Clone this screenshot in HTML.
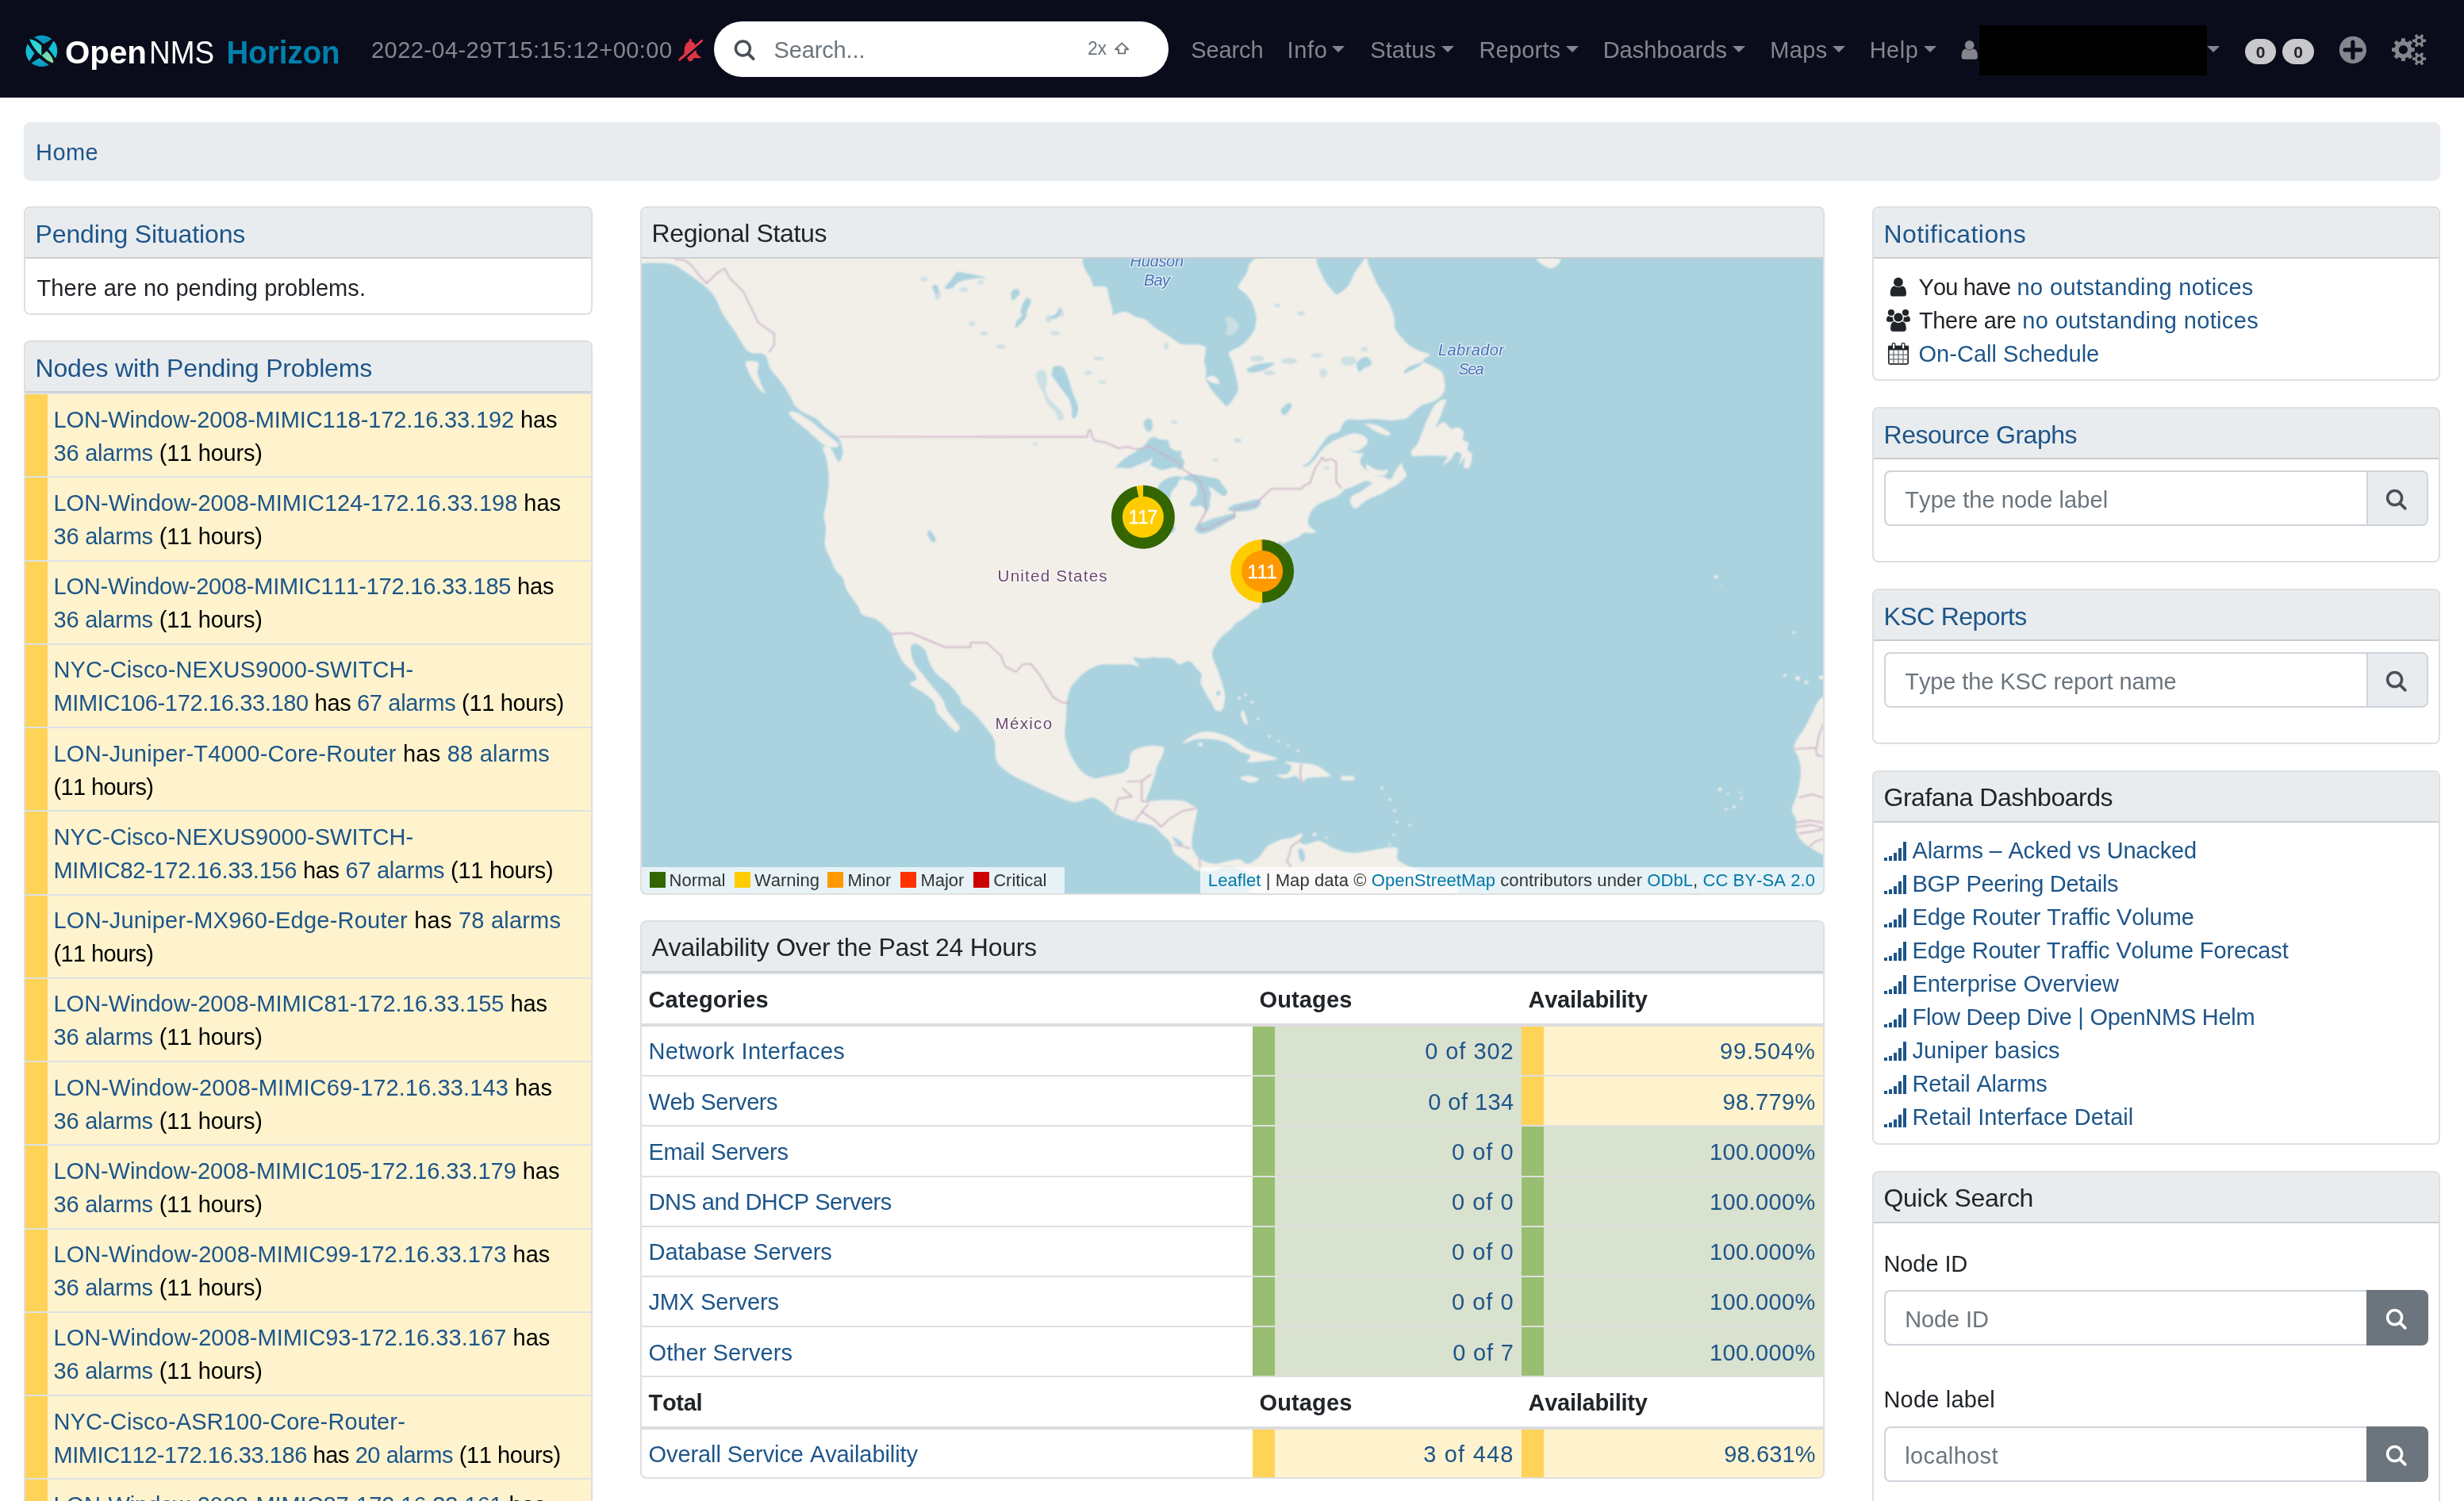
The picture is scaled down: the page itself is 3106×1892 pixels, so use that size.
<!DOCTYPE html>
<html lang="en"><head><meta charset="utf-8"><title>OpenNMS Web Console</title>
<style>
*{box-sizing:border-box}
html,body{margin:0;padding:0}
body{width:3106px;height:1892px;overflow:hidden;position:relative;background:#fff;font-family:"Liberation Sans",sans-serif;font-size:29px;line-height:42px;color:#212529;font-kerning:none;will-change:transform}
.lnk{color:#1d5589}
.nav{position:absolute;left:0;top:0;width:3106px;height:123px;background:#0a0c1b}
.nav .it{position:absolute;top:42px;height:42px;line-height:42px;color:#85868d;white-space:nowrap}
.nav .caret{position:absolute;top:58px;width:0;height:0;border-left:8px solid transparent;border-right:8px solid transparent;border-top:8.5px solid #85868d}
.bc{position:absolute;left:30px;top:154px;width:3046px;height:74px;background:#e9ecef;border-radius:8px;padding:17px 0 0 15px;white-space:nowrap}
.card{position:absolute;border:2px solid rgba(0,0,0,.125);border-radius:8px;background:#fff;overflow:hidden}
.card .hd{height:64px;line-height:62px;background:#e9ecef;border-bottom:2px solid rgba(0,0,0,.125);font-size:32px;padding-left:12.5px;white-space:nowrap;position:relative}
.card .hd span{position:relative;top:1.2px}
.abs{position:absolute;white-space:nowrap}
.prow{color:#000;height:105.25px;border-top:2px solid #dee2e6;background:#fef3cd;position:relative}
.prow .bar{position:absolute;left:0;top:0;bottom:0;width:28px;background:#fed358}
.prow .txt{position:absolute;left:35.5px;top:10.5px;white-space:nowrap}
.atab{position:relative;border-top:2px solid #dfdfe0}
.atab .ahead:first-child{height:66px}
.atab .ahead:first-child .c1,.atab .ahead:first-child .c2,.atab .ahead:first-child .c3{padding-top:10.9px}
.ahead,.arow{position:relative;white-space:nowrap}
.ahead{height:65.2px;border-bottom:4px solid #dddddf;font-weight:700}
.arow{height:63.2px;border-bottom:2px solid #dfdfe0}
.atab .c1,.atab .c2,.atab .c3{position:absolute;top:0;bottom:0;padding-top:10.4px}
.atab .c1{left:0;width:770px;padding-left:8.5px}
.atab .c2{left:770px;width:339px}
.atab .c3{left:1109px;width:380px}
.ahead .c2,.ahead .c3{padding-left:8.5px}
.arow .c2,.arow .c3{text-align:right;padding-right:9.3px}
.arow .bar{position:absolute;left:0;top:0;bottom:0;width:28px}

</style></head>
<body>
<div class="nav">
<svg class="abs" style="left:31.7px;top:43.7px" width="40.4" height="40.4" viewBox="0 0 40.4 40.4">
<defs>
<linearGradient id="lgA" x1="0" y1="0" x2="1" y2="1"><stop offset="0" stop-color="#17d4e2"/><stop offset="1" stop-color="#4fd9c2"/></linearGradient>
<linearGradient id="lgB" x1="0" y1="0" x2="1" y2="1"><stop offset="0" stop-color="#62d8bd"/><stop offset="1" stop-color="#8ce3a3"/></linearGradient>
<linearGradient id="lgC" x1="0" y1="0" x2="0" y2="1"><stop offset="0" stop-color="#0a9cc6"/><stop offset="1" stop-color="#0a8fba"/></linearGradient>
<linearGradient id="lgD" x1="0" y1="0" x2="0" y2="1"><stop offset="0" stop-color="#10b4d3"/><stop offset="1" stop-color="#0a8fba"/></linearGradient>
</defs>
<path d="M11.0,3.0 A20.2,20.2 0 0 1 33.4,5.2 L23.3,11.6 Q17,6.4 11.0,3.0Z" fill="url(#lgC)"/>
<path d="M35.8,7.3 A20.2,20.2 0 0 1 37.9,29.5 Q33.5,22.5 29.1,17.7Z" fill="#12bfd8"/>
<path d="M5.0,33.2 A20.2,20.2 0 0 1 2.8,11.2 Q7,17.5 11.4,23.1Z" fill="#13bdd7"/>
<path d="M29.7,37.7 A20.2,20.2 0 0 1 7.3,35.6 L17.7,29.3 Q24,34.5 29.7,37.7Z" fill="url(#lgD)"/>
<path d="M5.6,6.4 Q4.6,5 6.6,5.4 Q14,7 20.3,13.6 L20.3,26.3 Q10,17.5 5.6,6.4Z" fill="url(#lgA)"/>
<path d="M20.7,26.1 L26.9,20.3 Q34.5,27.5 35.3,34.0 Q35.3,35.6 33.4,35.0 Q27,33 20.7,26.1Z" fill="url(#lgB)"/>
</svg><svg class="abs" style="left:78px;top:36px" width="360" height="60" viewBox="0 0 360 60">
<text x="4" y="44" font-family="Liberation Sans, sans-serif" font-weight="700" font-size="41" fill="#fff" textLength="103" lengthAdjust="spacingAndGlyphs">Open</text>
<text x="110" y="44" font-family="Liberation Sans, sans-serif" font-weight="400" font-size="41" fill="#fff" textLength="82" lengthAdjust="spacingAndGlyphs">NMS</text>
<text x="207.6" y="44" font-family="Liberation Sans, sans-serif" font-weight="700" font-size="41" fill="#0081ad" textLength="143" lengthAdjust="spacingAndGlyphs">Horizon</text>
</svg>
<div class="it" style="left:468px"><span style="letter-spacing:0.44px;">2022-04-29T15:15:12+00:00</span></div>
<svg class="abs" style="left:850px;top:44px" width="40" height="38" viewBox="850 44 40 38">
<circle cx="870.2" cy="51" r="1.9" fill="#dc3545"/>
<path d="M862.6,66 C862.6,57.5 864.6,52.2 870.2,52.2 C875.8,52.2 877.6,57.5 877.6,63.5 C877.6,68 880.2,70 883.4,71.8 L883.4,73.2 L856.8,73.2 L856.8,72.2 C860.6,70.5 862.6,69 862.6,66Z" fill="#dc3545"/>
<path d="M866.6,73 L874.2,73 Q873.6,77.2 870.2,77.2 Q867.2,77.2 866.6,73Z" fill="#dc3545"/>
<path d="M857.4,78.2 L887.4,52.6" stroke="#0a0c1b" stroke-width="2.8"/>
<path d="M855.6,76.2 L885.6,50.6" stroke="#dc3545" stroke-width="2.7"/>
</svg>
<div class="abs" style="left:900px;top:27px;width:573px;height:70px;border-radius:35px;background:#fff"></div>
<svg class="abs" style="left:924px;top:49px" width="30" height="30" viewBox="924 49 30 30">
<circle cx="936.4" cy="61" r="9" fill="none" stroke="#495057" stroke-width="3.5"/>
<path d="M943.2 67.9 L949.6 74.2" stroke="#495057" stroke-width="3.8" stroke-linecap="round"/></svg>
<div class="abs" style="left:975.5px;top:42px;color:#6c757d;line-height:42px"><span style="letter-spacing:-0.14px;">Search...</span></div>
<div class="abs" style="left:1371px;top:40px;color:#6c757d;line-height:42px;font-size:23px"><span style="letter-spacing:-0.29px;">2x</span></div>
<svg class="abs" style="left:1403px;top:52px" width="22" height="18" viewBox="1403 52 22 18">
<path d="M1414.1,54.4 L1422.2,62.2 L1418.2,62.2 L1418.2,67.4 L1410,67.4 L1410,62.2 L1406,62.2Z" fill="none" stroke="#6c757d" stroke-width="1.9" stroke-linejoin="round"/></svg>
<div class="it" style="left:1501.3px"><span style="letter-spacing:-0.12px;">Search</span></div>
<div class="it" style="left:1622.6px"><span style="letter-spacing:0.67px;">Info</span></div><div class="caret" style="left:1679.3px"></div>
<div class="it" style="left:1727.2px"><span style="letter-spacing:0.11px;">Status</span></div><div class="caret" style="left:1817.4px"></div>
<div class="it" style="left:1864.5px"><span style="letter-spacing:0.18px;">Reports</span></div><div class="caret" style="left:1974px"></div>
<div class="it" style="left:2020.7px"><span style="letter-spacing:-0.02px;">Dashboards</span></div><div class="caret" style="left:2184px"></div>
<div class="it" style="left:2231.2px"><span style="letter-spacing:0.40px;">Maps</span></div><div class="caret" style="left:2310px"></div>
<div class="it" style="left:2356.7px"><span style="letter-spacing:0.48px;">Help</span></div><div class="caret" style="left:2425px"></div>
<svg class="abs" style="left:2470px;top:49px" width="26" height="28" viewBox="2470 49 26 28"><path d="M2476.80,56.90 a5.90,5.90 0 1,0 11.80,0 a5.90,5.90 0 1,0 -11.80,0Z M2478.10,61.60 Q2482.70,65.00 2487.30,61.60 C2491.70,61.80 2492.80,66.60 2492.80,71.40 Q2492.80,74.80 2489.40,74.80 L2476.00,74.80 Q2472.60,74.80 2472.60,71.40 C2472.60,66.60 2473.70,61.80 2478.10,61.60Z" fill="#85868d"/></svg><div class="abs" style="left:2495px;top:32px;width:287px;height:63px;background:#000"></div>
<div class="caret" style="left:2782.4px"></div>
<div class="abs" style="left:2830px;top:49px;width:39px;height:32px;border-radius:16px;background:#c9c9cc;color:#212529;font-weight:700;font-size:21px;line-height:33px;text-align:center">0</div><div class="abs" style="left:2877px;top:49px;width:40px;height:32px;border-radius:16px;background:#c9c9cc;color:#212529;font-weight:700;font-size:21px;line-height:33px;text-align:center">0</div><svg class="abs" style="left:2946px;top:43px" width="40" height="40" viewBox="2946 43 40 40">
<circle cx="2965.9" cy="62.9" r="17.1" fill="#85868d"/>
<path d="M2956.1,62.9 L2975.7,62.9 M2965.9,53.1 L2965.9,72.7" stroke="#0a0c1b" stroke-width="5.2" stroke-linecap="round"/></svg><svg class="abs" style="left:3012px;top:40px" width="50" height="46" viewBox="3012 40 50 46">
<path fill-rule="evenodd" fill="#85868d" d="M3026.75,51.92 L3027.00,48.20 L3031.80,48.20 L3032.05,51.92 L3035.07,53.18 L3037.89,50.72 L3041.28,54.11 L3038.82,56.93 L3040.08,59.95 L3043.80,60.20 L3043.80,65.00 L3040.08,65.25 L3038.82,68.27 L3041.28,71.09 L3037.89,74.48 L3035.07,72.02 L3032.05,73.28 L3031.80,77.00 L3027.00,77.00 L3026.75,73.28 L3023.73,72.02 L3020.91,74.48 L3017.52,71.09 L3019.98,68.27 L3018.72,65.25 L3015.00,65.00 L3015.00,60.20 L3018.72,59.95 L3019.98,56.93 L3017.52,54.11 L3020.91,50.72 L3023.73,53.18Z M3023.80,62.60 a5.60,5.60 0 1,0 11.20,0 a5.60,5.60 0 1,0 -11.20,0Z"/>
<path fill-rule="evenodd" fill="#85868d" d="M3050.49,45.79 L3052.36,43.08 L3055.18,44.71 L3053.78,47.69 L3054.77,49.40 L3058.05,49.67 L3058.05,52.93 L3054.77,53.20 L3053.78,54.91 L3055.18,57.89 L3052.36,59.52 L3050.49,56.81 L3048.51,56.81 L3046.64,59.52 L3043.82,57.89 L3045.22,54.91 L3044.23,53.20 L3040.95,52.93 L3040.95,49.67 L3044.23,49.40 L3045.22,47.69 L3043.82,44.71 L3046.64,43.08 L3048.51,45.79Z M3046.90,51.30 a2.60,2.60 0 1,0 5.20,0 a2.60,2.60 0 1,0 -5.20,0Z"/>
<path fill-rule="evenodd" fill="#85868d" d="M3050.49,68.59 L3052.36,65.88 L3055.18,67.51 L3053.78,70.49 L3054.77,72.20 L3058.05,72.47 L3058.05,75.73 L3054.77,76.00 L3053.78,77.71 L3055.18,80.69 L3052.36,82.32 L3050.49,79.61 L3048.51,79.61 L3046.64,82.32 L3043.82,80.69 L3045.22,77.71 L3044.23,76.00 L3040.95,75.73 L3040.95,72.47 L3044.23,72.20 L3045.22,70.49 L3043.82,67.51 L3046.64,65.88 L3048.51,68.59Z M3046.90,74.10 a2.60,2.60 0 1,0 5.20,0 a2.60,2.60 0 1,0 -5.20,0Z"/>
</svg>
</div>
<div class="bc"><span class="lnk"><span style="letter-spacing:0.44px;">Home</span></span></div>

<div class="card" style="left:30px;top:260px;width:717px;height:137px">
 <div class="hd"><span class="lnk"><span style="letter-spacing:-0.12px;">Pending Situations</span></span></div>
 <div class="abs" style="left:14.5px;top:80px"><span style="letter-spacing:0.06px;">There are no pending problems.</span></div>
</div>
<div class="card" style="left:30px;top:429px;width:717px;height:1500px">
 <div class="hd"><span class="lnk"><span style="letter-spacing:-0.15px;">Nodes with Pending Problems</span></span></div>
 <div class="prow"><div class="bar"></div><div class="txt"><span style="letter-spacing:-0.12px"><span class="lnk">LON-Window-2008-MIMIC118-172.16.33.192</span> has</span><br><span style="letter-spacing:-0.22px"><span class="lnk">36 alarms</span> (11 hours)</span></div></div><div class="prow"><div class="bar"></div><div class="txt"><span style="letter-spacing:-0.01px"><span class="lnk">LON-Window-2008-MIMIC124-172.16.33.198</span> has</span><br><span style="letter-spacing:-0.22px"><span class="lnk">36 alarms</span> (11 hours)</span></div></div><div class="prow"><div class="bar"></div><div class="txt"><span style="letter-spacing:-0.22px"><span class="lnk">LON-Window-2008-MIMIC111-172.16.33.185</span> has</span><br><span style="letter-spacing:-0.22px"><span class="lnk">36 alarms</span> (11 hours)</span></div></div><div class="prow"><div class="bar"></div><div class="txt"><span style="letter-spacing:0.10px"><span class="lnk">NYC-Cisco-NEXUS9000-SWITCH-</span></span><br><span style="letter-spacing:-0.34px"><span class="lnk">MIMIC106-172.16.33.180</span> has <span class="lnk">67 alarms</span> (11 hours)</span></div></div><div class="prow"><div class="bar"></div><div class="txt"><span style="letter-spacing:0.23px"><span class="lnk">LON-Juniper-T4000-Core-Router</span> has <span class="lnk">88 alarms</span></span><br><span style="letter-spacing:-0.64px">(11 hours)</span></div></div><div class="prow"><div class="bar"></div><div class="txt"><span style="letter-spacing:0.10px"><span class="lnk">NYC-Cisco-NEXUS9000-SWITCH-</span></span><br><span style="letter-spacing:-0.29px"><span class="lnk">MIMIC82-172.16.33.156</span> has <span class="lnk">67 alarms</span> (11 hours)</span></div></div><div class="prow"><div class="bar"></div><div class="txt"><span style="letter-spacing:0.22px"><span class="lnk">LON-Juniper-MX960-Edge-Router</span> has <span class="lnk">78 alarms</span></span><br><span style="letter-spacing:-0.64px">(11 hours)</span></div></div><div class="prow"><div class="bar"></div><div class="txt"><span style="letter-spacing:-0.03px"><span class="lnk">LON-Window-2008-MIMIC81-172.16.33.155</span> has</span><br><span style="letter-spacing:-0.22px"><span class="lnk">36 alarms</span> (11 hours)</span></div></div><div class="prow"><div class="bar"></div><div class="txt"><span style="letter-spacing:0.12px"><span class="lnk">LON-Window-2008-MIMIC69-172.16.33.143</span> has</span><br><span style="letter-spacing:-0.22px"><span class="lnk">36 alarms</span> (11 hours)</span></div></div><div class="prow"><div class="bar"></div><div class="txt"><span style="letter-spacing:-0.05px"><span class="lnk">LON-Window-2008-MIMIC105-172.16.33.179</span> has</span><br><span style="letter-spacing:-0.22px"><span class="lnk">36 alarms</span> (11 hours)</span></div></div><div class="prow"><div class="bar"></div><div class="txt"><span style="letter-spacing:0.05px"><span class="lnk">LON-Window-2008-MIMIC99-172.16.33.173</span> has</span><br><span style="letter-spacing:-0.22px"><span class="lnk">36 alarms</span> (11 hours)</span></div></div><div class="prow"><div class="bar"></div><div class="txt"><span style="letter-spacing:0.05px"><span class="lnk">LON-Window-2008-MIMIC93-172.16.33.167</span> has</span><br><span style="letter-spacing:-0.22px"><span class="lnk">36 alarms</span> (11 hours)</span></div></div><div class="prow"><div class="bar"></div><div class="txt"><span style="letter-spacing:0.12px"><span class="lnk">NYC-Cisco-ASR100-Core-Router-</span></span><br><span style="letter-spacing:-0.43px"><span class="lnk">MIMIC112-172.16.33.186</span> has <span class="lnk">20 alarms</span> (11 hours)</span></div></div><div class="prow"><div class="bar"></div><div class="txt"><span style="letter-spacing:-0.08px"><span class="lnk">LON-Window-2008-MIMIC87-172.16.33.161</span> has</span><br><span style="letter-spacing:-0.22px"><span class="lnk">36 alarms</span> (11 hours)</span></div></div>
</div>


<div class="card" style="left:807px;top:260px;width:1493px;height:868px">
 <div class="hd"><span style="letter-spacing:-0.35px;">Regional Status</span></div>
 <div style="position:relative;width:1489px;height:800px;background:#aad3df;overflow:hidden">
  <svg class="abs" style="left:0;top:0" width="1489" height="800" viewBox="809 326 1489 800">
<defs><filter id="mb" x="-2%" y="-2%" width="104%" height="104%"><feGaussianBlur stdDeviation="1.0"/></filter><filter id="mb2" x="-2%" y="-2%" width="104%" height="104%"><feGaussianBlur stdDeviation="0.55"/></filter></defs>
<rect x="800" y="316" width="1510" height="820" fill="#aad3df"/>
<g filter="url(#mb)">
<rect x="780" y="300" width="1550" height="860" fill="#aad3df"/>
<g fill="#f2efe9"><path d="M790.0,290.0 C929.7,289.7 1581.0,282.6 1721.1,288.0 C1861.2,293.4 1723.0,318.7 1723.8,325.9 C1724.6,333.1 1724.4,330.9 1726.4,336.0 C1728.4,341.1 1733.5,353.2 1737.1,360.0 C1740.7,366.8 1747.4,375.3 1750.4,381.3 C1753.4,387.3 1756.0,395.0 1757.3,400.0 C1758.5,405.0 1757.2,410.7 1758.7,414.7 C1760.3,418.6 1764.9,423.3 1767.5,426.4 C1770.1,429.5 1773.0,432.8 1776.3,435.2 C1779.6,437.6 1785.5,440.7 1789.5,442.5 C1793.5,444.3 1802.0,445.1 1802.7,446.9 C1803.3,448.7 1793.5,452.0 1793.9,454.2 C1794.3,456.4 1802.1,459.4 1805.6,461.6 C1809.1,463.8 1815.0,465.8 1817.3,468.9 C1819.6,472.0 1820.6,478.3 1821.0,482.1 C1821.4,485.8 1821.5,490.7 1820.3,493.8 C1819.1,496.9 1815.4,500.6 1812.9,502.6 C1810.5,504.6 1807.4,505.7 1804.2,507.0 C1800.9,508.3 1794.5,509.4 1791.0,511.4 C1787.4,513.4 1783.6,517.8 1780.7,520.2 C1777.8,522.6 1775.9,526.1 1771.9,527.5 C1767.9,528.9 1760.0,529.6 1754.3,529.7 C1748.6,529.8 1739.5,528.4 1733.8,528.2 C1728.1,528.1 1721.5,528.9 1716.2,529.0 C1710.9,529.1 1702.4,527.9 1698.6,529.0 C1694.9,530.1 1692.8,534.1 1691.3,536.3 C1689.8,538.5 1690.6,541.9 1688.4,543.6 C1686.2,545.4 1679.5,546.3 1676.6,548.0 C1673.8,549.8 1671.5,552.7 1669.3,555.4 C1667.1,558.0 1664.4,562.1 1662.0,565.6 C1659.6,569.1 1655.4,575.9 1653.2,578.8 C1651.0,581.7 1648.0,583.9 1647.3,584.7 C1646.6,585.4 1649.4,583.5 1648.5,584.0 C1647.5,584.4 1641.1,587.1 1641.1,587.6 C1641.1,588.1 1646.0,588.4 1648.5,587.2 C1650.9,586.0 1654.8,582.3 1657.3,579.6 C1659.7,576.9 1662.4,572.0 1664.6,569.3 C1666.8,566.7 1669.5,564.0 1671.9,562.0 C1674.3,560.0 1677.4,557.9 1680.7,556.1 C1684.0,554.4 1690.2,551.7 1693.9,550.3 C1697.6,548.8 1702.3,546.9 1705.6,546.6 C1708.9,546.3 1713.2,547.1 1715.9,548.1 C1718.5,549.1 1722.1,551.5 1723.2,553.2 C1724.3,554.8 1724.1,557.3 1723.2,559.1 C1722.3,560.8 1719.5,563.5 1717.3,564.9 C1715.1,566.3 1711.4,568.4 1708.5,568.6 C1705.7,568.8 1698.7,566.3 1698.3,566.4 C1697.8,566.5 1703.4,568.5 1705.6,569.3 C1707.8,570.1 1711.0,571.3 1712.9,571.5 C1714.9,571.7 1718.4,570.0 1718.8,570.8 C1719.2,571.5 1716.5,574.9 1715.9,576.6 C1715.2,578.4 1714.0,580.5 1714.4,582.5 C1714.8,584.5 1717.0,587.9 1718.8,589.8 C1720.6,591.8 1723.7,594.2 1726.1,595.7 C1728.6,597.2 1732.3,599.3 1734.9,600.1 C1737.6,600.9 1741.3,600.2 1743.7,600.8 C1746.1,601.5 1749.3,604.4 1751.1,604.5 C1752.8,604.6 1754.6,602.7 1755.4,601.6 C1756.3,600.5 1755.8,599.1 1756.9,597.2 C1758.0,595.2 1761.2,590.3 1762.8,588.4 C1764.3,586.4 1766.3,583.7 1767.2,584.0 C1768.1,584.2 1767.8,587.6 1768.6,589.8 C1769.5,592.0 1773.0,596.4 1773.0,598.6 C1773.0,600.8 1770.6,602.5 1768.6,604.5 C1766.7,606.5 1762.5,610.1 1759.8,611.8 C1757.2,613.6 1753.7,614.7 1751.1,616.2 C1748.4,617.8 1745.3,620.5 1742.3,622.1 C1739.2,623.6 1733.6,625.2 1730.5,626.5 C1727.5,627.8 1724.4,629.1 1721.7,630.9 C1719.1,632.6 1715.0,636.7 1712.9,638.2 C1710.9,639.7 1709.4,641.6 1707.8,641.1 C1706.3,640.7 1703.6,637.0 1702.7,635.3 C1701.8,633.5 1701.4,631.1 1702.0,629.4 C1702.5,627.7 1704.5,625.2 1706.3,623.8 C1708.2,622.4 1712.1,621.5 1714.4,620.2 C1716.7,618.9 1719.4,616.7 1721.7,615.0 C1724.0,613.3 1729.8,610.2 1729.8,608.9 C1729.8,607.6 1724.0,606.2 1721.7,606.2 C1719.4,606.3 1717.0,608.1 1714.4,609.2 C1711.8,610.3 1707.2,612.5 1704.2,613.7 C1701.1,615.0 1695.7,616.5 1693.9,617.4 C1692.1,618.3 1694.0,618.5 1692.4,619.9 C1690.9,621.2 1686.3,625.0 1683.6,626.5 C1681.0,627.9 1677.0,628.5 1674.8,629.4 C1672.6,630.3 1671.2,631.2 1669.0,632.3 C1666.8,633.4 1662.6,635.0 1660.2,636.7 C1657.8,638.5 1654.4,641.9 1652.9,644.1 C1651.3,646.3 1650.6,649.2 1649.9,651.4 C1649.3,653.6 1648.2,656.7 1648.5,658.7 C1648.7,660.7 1650.1,663.0 1651.4,664.6 C1652.7,666.1 1656.3,668.0 1657.3,669.0 C1658.2,670.0 1658.9,670.7 1658.0,671.2 C1657.1,671.6 1653.7,671.8 1651.4,671.9 C1649.1,672.0 1644.8,671.1 1642.6,671.9 C1640.4,672.7 1638.9,675.9 1636.7,677.0 C1634.5,678.1 1630.1,678.7 1627.9,679.2 C1625.7,679.8 1623.8,679.8 1622.1,680.7 C1620.3,681.6 1618.0,684.2 1616.2,685.1 C1614.5,686.0 1614.4,675.3 1610.4,686.6 C1606.3,697.8 1593.9,748.0 1589.5,760.3 C1585.0,772.6 1583.3,766.1 1580.7,768.4 C1578.1,770.7 1574.3,773.7 1571.9,775.7 C1569.5,777.7 1566.8,780.0 1564.6,781.6 C1562.4,783.1 1559.2,784.2 1557.3,786.0 C1555.3,787.7 1553.6,791.2 1551.4,793.3 C1549.2,795.4 1545.0,797.7 1542.6,799.9 C1540.2,802.1 1537.0,805.6 1535.3,807.9 C1533.5,810.2 1532.0,813.1 1530.9,815.3 C1529.8,817.5 1528.2,820.2 1527.9,822.6 C1527.7,825.0 1528.5,828.5 1529.4,831.4 C1530.3,834.2 1532.6,838.6 1533.8,841.6 C1535.0,844.7 1536.4,848.6 1537.5,851.9 C1538.6,855.2 1540.1,860.1 1541.1,863.6 C1542.1,867.1 1543.7,872.1 1544.1,875.4 C1544.4,878.7 1543.9,882.6 1543.3,885.6 C1542.8,888.6 1542.0,893.7 1540.4,895.1 C1538.7,896.6 1534.2,896.4 1532.3,895.1 C1530.5,893.9 1529.7,890.0 1527.9,887.1 C1526.2,884.1 1522.4,878.4 1520.6,875.4 C1518.9,872.3 1517.3,869.0 1516.2,866.6 C1515.1,864.1 1513.5,861.7 1513.3,859.2 C1513.1,856.8 1515.4,852.9 1514.7,850.4 C1514.1,848.0 1510.6,845.3 1508.9,843.1 C1507.1,840.9 1504.7,837.3 1503.0,835.8 C1501.4,834.2 1499.7,832.9 1497.9,832.9 C1496.1,832.9 1493.2,835.1 1491.3,835.8 C1489.4,836.4 1487.2,837.9 1485.4,837.3 C1483.7,836.6 1481.6,832.6 1479.6,831.4 C1477.6,830.2 1474.9,829.5 1472.2,829.2 C1469.6,828.9 1464.6,829.3 1462.0,829.2 C1459.3,829.1 1456.9,828.5 1454.7,828.5 C1452.5,828.5 1449.5,829.0 1447.3,829.2 C1445.1,829.4 1442.8,829.9 1440.0,829.9 C1437.2,829.9 1428.9,827.7 1428.4,829.3 C1427.9,830.8 1437.0,839.0 1436.6,840.2 C1436.2,841.4 1429.8,837.9 1425.7,837.5 C1421.6,837.1 1414.6,837.5 1409.3,837.5 C1404.0,837.5 1395.5,836.7 1390.2,837.5 C1384.8,838.3 1378.3,840.5 1373.8,843.0 C1369.3,845.4 1363.8,850.2 1360.1,853.9 C1356.4,857.6 1351.4,863.0 1349.2,867.5 C1346.9,872.0 1345.9,878.2 1345.1,883.9 C1344.3,889.7 1344.1,899.2 1343.7,905.8 C1343.3,912.3 1341.9,921.9 1342.3,927.7 C1342.8,933.4 1344.6,939.1 1346.4,944.0 C1348.3,949.0 1351.8,955.9 1354.6,960.4 C1357.5,964.9 1361.9,971.0 1365.6,974.1 C1369.3,977.2 1374.7,980.3 1379.2,980.9 C1383.7,981.5 1390.3,979.2 1395.6,978.2 C1401.0,977.2 1410.7,975.9 1414.8,974.1 C1418.9,972.3 1421.3,969.6 1423.0,965.9 C1424.6,962.2 1423.6,953.0 1425.7,949.5 C1427.7,946.0 1432.5,944.1 1436.6,942.7 C1440.7,941.2 1448.5,939.9 1453.0,939.9 C1457.5,939.9 1465.0,940.4 1466.7,942.7 C1468.3,944.9 1465.2,951.5 1463.9,955.0 C1462.7,958.5 1459.7,962.6 1458.5,965.9 C1457.2,969.2 1457.0,972.7 1455.7,976.8 C1454.5,980.9 1451.9,988.5 1450.3,993.2 C1448.6,997.9 1444.4,1005.8 1444.8,1008.3 C1445.2,1010.7 1449.3,1009.6 1453.0,1009.6 C1456.7,1009.6 1463.7,1008.3 1469.4,1008.3 C1475.1,1008.3 1486.3,1008.6 1491.3,1009.6 C1496.2,1010.6 1499.5,1013.4 1502.2,1015.1 C1504.8,1016.7 1508.6,1016.4 1509.0,1020.5 C1509.4,1024.6 1505.9,1035.8 1504.9,1042.4 C1503.9,1049.0 1501.8,1058.9 1502.2,1064.3 C1502.6,1069.6 1505.2,1074.6 1507.7,1077.9 C1510.1,1081.2 1514.9,1084.5 1518.6,1086.1 C1522.3,1087.8 1528.1,1088.9 1532.2,1088.9 C1536.3,1088.9 1541.4,1086.9 1545.9,1086.1 C1550.4,1085.3 1558.2,1083.0 1562.3,1083.4 C1566.4,1083.8 1569.5,1089.3 1573.2,1088.9 C1576.9,1088.4 1583.2,1083.9 1586.9,1080.7 C1590.6,1077.4 1593.7,1070.3 1597.8,1067.0 C1601.9,1063.7 1609.7,1060.4 1614.2,1058.8 C1618.7,1057.2 1623.8,1057.3 1627.9,1056.1 C1632.0,1054.8 1639.9,1049.8 1641.5,1050.6 C1643.2,1051.4 1638.0,1059.5 1638.8,1061.5 C1639.6,1063.6 1643.3,1064.5 1647.0,1064.3 C1650.7,1064.1 1658.1,1059.3 1663.4,1060.2 C1668.7,1061.0 1676.4,1067.5 1682.5,1069.7 C1688.7,1072.0 1697.8,1074.8 1704.4,1075.2 C1710.9,1075.6 1719.7,1073.5 1726.2,1072.5 C1732.8,1071.4 1742.8,1068.8 1748.1,1068.4 C1753.4,1068.0 1759.7,1067.5 1761.7,1069.7 C1763.8,1072.0 1758.9,1079.7 1761.7,1083.4 C1764.6,1087.1 1775.1,1091.4 1780.9,1094.3 C1786.6,1097.2 1792.6,1097.8 1800.0,1102.5 C1807.4,1107.3 1861.6,1122.5 1830.0,1126.0 C1798.4,1129.5 1626.5,1127.5 1589.6,1126.0 C1552.7,1124.5 1586.2,1119.7 1584.2,1116.2 C1582.1,1112.7 1579.2,1105.6 1576.0,1102.5 C1572.7,1099.4 1566.8,1097.1 1562.3,1095.7 C1557.8,1094.2 1551.2,1092.5 1545.9,1093.0 C1540.6,1093.4 1532.5,1097.8 1526.8,1098.4 C1521.0,1099.0 1511.3,1098.1 1507.7,1097.0 C1504.0,1096.0 1504.6,1093.6 1502.2,1091.6 C1499.7,1089.5 1494.5,1085.8 1491.3,1083.4 C1488.0,1080.9 1482.8,1078.5 1480.3,1075.2 C1477.9,1071.9 1477.3,1065.2 1474.9,1061.5 C1472.4,1057.8 1467.2,1053.7 1463.9,1050.6 C1460.7,1047.5 1458.3,1043.5 1453.0,1041.0 C1447.7,1038.6 1435.4,1036.5 1428.4,1034.2 C1421.4,1032.0 1411.9,1029.1 1406.6,1026.0 C1401.2,1022.9 1397.4,1016.8 1392.9,1013.7 C1388.4,1010.6 1382.2,1005.9 1376.5,1005.5 C1370.8,1005.1 1362.0,1011.6 1354.6,1011.0 C1347.3,1010.4 1335.5,1004.7 1327.3,1001.4 C1319.1,998.1 1307.8,992.8 1300.0,989.1 C1292.2,985.4 1281.6,980.7 1275.4,976.8 C1269.3,972.9 1262.1,966.9 1259.0,963.2 C1255.9,959.5 1255.7,956.7 1254.9,952.2 C1254.1,947.7 1255.4,938.4 1253.6,933.1 C1251.7,927.8 1246.7,922.0 1242.6,916.7 C1238.5,911.4 1230.7,902.1 1226.2,897.6 C1221.7,893.1 1215.0,889.5 1212.6,886.7 C1210.1,883.8 1212.3,882.2 1209.8,878.5 C1207.4,874.8 1200.7,866.6 1196.2,862.1 C1191.7,857.6 1183.5,852.5 1179.8,848.4 C1176.1,844.3 1173.6,839.1 1171.6,834.8 C1169.5,830.5 1168.6,823.2 1166.1,819.7 C1163.7,816.2 1157.9,812.3 1155.2,811.5 C1152.5,810.7 1149.2,811.6 1148.4,814.3 C1147.5,816.9 1148.7,825.4 1149.7,829.3 C1150.8,833.2 1152.7,836.5 1155.2,840.2 C1157.7,843.9 1162.8,849.8 1166.1,853.9 C1169.4,858.0 1173.8,863.4 1177.0,867.5 C1180.3,871.6 1185.5,877.1 1188.0,881.2 C1190.4,885.3 1191.4,891.2 1193.4,894.9 C1195.5,898.6 1199.2,902.5 1201.6,905.8 C1204.1,909.1 1209.4,914.3 1209.8,916.7 C1210.2,919.2 1207.2,923.4 1204.4,922.2 C1201.5,921.0 1194.2,912.2 1190.7,908.5 C1187.2,904.8 1183.2,901.3 1181.1,897.6 C1179.1,893.9 1179.7,887.6 1177.0,883.9 C1174.4,880.2 1167.9,876.3 1163.4,873.0 C1158.9,869.7 1148.2,864.5 1147.0,862.1 C1145.8,859.6 1154.4,858.7 1155.2,856.6 C1156.0,854.6 1154.9,851.7 1152.5,848.4 C1150.0,845.1 1142.5,840.1 1138.8,834.8 C1135.1,829.4 1130.1,818.2 1127.9,812.9 C1125.6,807.6 1125.8,802.9 1123.8,799.2 C1121.7,795.5 1117.3,791.2 1114.2,788.3 C1111.1,785.4 1107.4,782.2 1103.3,780.1 C1099.2,778.1 1090.2,777.1 1086.9,774.6 C1083.6,772.2 1084.3,768.2 1081.4,763.7 C1078.6,759.2 1070.6,749.9 1067.8,744.6 C1064.9,739.3 1064.3,731.9 1062.3,728.2 C1060.2,724.5 1056.5,723.7 1054.1,720.0 C1051.7,716.3 1048.7,708.6 1046.5,703.8 C1044.4,699.0 1040.7,693.4 1039.9,687.8 C1039.1,682.2 1041.4,672.1 1041.2,666.5 C1041.0,660.9 1038.3,656.1 1038.5,650.5 C1038.7,644.9 1041.6,635.6 1042.5,629.2 C1043.5,622.8 1044.5,613.4 1044.7,607.8 C1044.9,602.2 1044.4,596.7 1043.9,591.9 C1043.4,587.1 1042.2,580.1 1041.2,575.9 C1040.2,571.7 1036.6,565.8 1037.2,563.9 C1037.8,562.0 1043.2,562.1 1045.2,563.1 C1047.2,564.1 1048.7,567.6 1050.5,570.5 C1052.3,573.5 1055.4,582.5 1057.2,582.5 C1059.0,582.5 1062.1,574.3 1062.5,570.5 C1062.9,566.7 1060.9,560.2 1059.9,557.2 C1058.9,554.2 1057.3,552.1 1055.9,550.5 C1054.5,548.9 1052.9,548.3 1050.5,546.5 C1048.1,544.7 1043.1,541.3 1039.9,538.6 C1036.7,535.8 1033.2,530.7 1029.2,527.9 C1025.2,525.1 1017.2,522.3 1013.2,519.9 C1009.2,517.5 1005.0,514.7 1002.6,511.9 C1000.2,509.1 999.2,504.8 997.2,501.2 C995.2,497.6 991.6,491.5 989.2,487.9 C986.8,484.3 984.0,480.8 981.2,477.2 C978.4,473.7 972.8,467.9 970.6,463.9 C968.4,459.9 968.2,453.4 966.6,450.6 C965.0,447.8 962.5,446.1 959.9,445.3 C957.3,444.5 952.1,445.9 949.3,445.3 C946.5,444.7 943.7,443.7 941.3,441.3 C938.9,438.9 935.7,433.1 933.3,429.3 C930.9,425.5 927.7,419.5 925.3,415.9 C922.9,412.4 919.7,408.9 917.3,405.3 C914.9,401.7 911.7,396.6 909.3,392.0 C906.9,387.4 904.1,379.0 901.3,374.6 C898.5,370.2 894.2,366.0 890.6,362.6 C887.0,359.2 881.3,355.0 877.3,352.0 C873.3,349.0 868.4,345.5 864.0,342.7 C859.6,339.9 853.6,335.0 848.0,333.3 C842.4,331.6 832.5,331.4 826.7,331.2 C820.8,331.0 815.2,331.8 808.8,332.0 C802.4,332.2 786.8,339.1 784.0,332.8 C781.2,326.5 789.1,296.4 790.0,290.0 C790.9,283.6 650.3,290.3 790.0,290.0Z"/><path d="M994.6,519.4 C995.5,518.1 1000.8,518.6 1005.2,520.4 C1009.7,522.3 1016.3,527.1 1021.2,530.6 C1026.1,534.0 1030.1,537.7 1034.5,541.2 C1039.0,544.8 1044.1,548.8 1047.9,551.9 C1051.6,555.0 1056.3,557.9 1057.2,559.9 C1058.1,561.9 1056.1,563.6 1053.2,563.9 C1050.3,564.1 1043.9,563.0 1039.9,561.2 C1035.9,559.4 1033.7,557.0 1029.2,553.2 C1024.8,549.4 1018.1,542.8 1013.2,538.6 C1008.3,534.3 1003.0,531.1 999.9,527.9 C996.8,524.7 993.7,520.6 994.6,519.4Z"/><path d="M940.7,455.9 C942.9,454.4 953.6,455.0 955.9,457.3 C958.2,459.5 953.9,464.6 954.6,469.3 C955.3,473.9 958.2,480.8 959.9,485.2 C961.6,489.7 965.2,495.0 964.7,495.9 C964.3,496.8 960.0,493.7 957.2,490.6 C954.5,487.5 950.4,481.2 947.9,477.2 C945.5,473.3 943.8,470.1 942.6,466.6 C941.4,463.0 938.5,457.5 940.7,455.9Z"/><path d="M1823.2,504.1 C1823.8,504.9 1821.2,508.7 1820.3,511.4 C1819.3,514.1 1817.2,521.1 1815.9,524.6 C1814.5,528.1 1809.4,536.8 1810.0,537.8 C1810.6,538.7 1817.7,531.5 1820.3,531.9 C1822.8,532.3 1826.7,539.8 1829.1,540.7 C1831.4,541.6 1835.7,537.9 1837.9,538.5 C1840.0,539.1 1844.4,543.0 1845.2,545.1 C1846.0,547.1 1842.9,552.1 1843.7,553.9 C1844.5,555.7 1850.3,556.5 1851.1,558.3 C1851.8,560.0 1849.0,565.1 1849.6,567.1 C1850.2,569.0 1855.1,570.0 1855.4,572.9 C1855.8,575.9 1853.9,586.9 1852.5,589.1 C1851.1,591.2 1846.0,590.8 1845.2,589.1 C1844.4,587.3 1847.4,576.3 1846.7,575.9 C1845.9,575.5 1839.9,586.5 1839.3,586.1 C1838.7,585.7 1842.8,575.1 1842.3,572.9 C1841.7,570.8 1836.7,569.2 1834.9,570.0 C1833.2,570.8 1831.2,576.7 1829.1,578.8 C1826.9,581.0 1819.4,586.5 1818.8,586.1 C1818.2,585.7 1825.5,577.4 1824.7,575.9 C1823.9,574.3 1816.9,574.6 1812.9,574.4 C1809.0,574.2 1799.7,574.4 1795.4,574.4 C1791.1,574.4 1782.9,575.2 1780.7,574.4 C1778.6,573.6 1778.5,570.5 1779.2,568.5 C1780.0,566.6 1785.0,562.3 1786.6,559.8 C1788.1,557.2 1789.8,552.4 1791.0,549.5 C1792.1,546.6 1794.0,541.1 1795.4,537.8 C1796.7,534.4 1799.7,527.9 1801.2,524.6 C1802.8,521.3 1805.1,515.5 1807.1,512.9 C1809.0,510.2 1813.7,506.0 1815.9,504.8 C1818.0,503.6 1822.6,503.2 1823.2,504.1Z"/><path d="M1720.6,534.1 C1721.8,533.6 1729.4,534.2 1733.8,535.6 C1738.2,536.9 1743.8,540.3 1747.0,542.2 C1750.2,544.0 1752.6,545.5 1752.9,546.6 C1753.1,547.7 1751.4,549.1 1748.5,548.8 C1745.5,548.4 1738.9,546.1 1735.3,544.4 C1731.6,542.7 1728.9,540.2 1726.5,538.5 C1724.0,536.8 1719.4,534.6 1720.6,534.1Z"/><path d="M1722.9,585.1 C1723.7,584.8 1725.1,587.0 1726.9,588.1 C1728.6,589.1 1730.9,590.8 1733.5,591.6 C1736.0,592.4 1739.6,593.0 1742.3,593.1 C1744.9,593.2 1748.8,591.2 1749.3,592.2 C1749.8,593.2 1747.9,597.7 1745.5,598.9 C1743.1,600.1 1738.2,599.7 1734.9,599.2 C1731.7,598.8 1728.0,597.8 1725.8,596.3 C1723.7,594.8 1722.7,592.0 1722.2,590.1 C1721.7,588.3 1722.1,585.5 1722.9,585.1Z"/><path d="M1614.7,681.4 C1615.7,680.3 1618.7,679.4 1622.1,678.5 C1625.5,677.6 1634.3,675.9 1635.3,676.3 C1636.2,676.7 1631.1,679.2 1627.9,680.7 C1624.8,682.2 1618.4,685.0 1616.2,685.1 C1614.0,685.2 1613.8,682.5 1614.7,681.4Z"/><path d="M1491.3,937.2 C1490.3,936.5 1497.6,930.2 1502.2,927.7 C1506.7,925.1 1512.7,922.6 1518.6,922.2 C1524.5,921.7 1531.3,923.1 1537.7,924.9 C1544.1,926.7 1550.9,929.9 1556.8,933.1 C1562.8,936.3 1566.8,941.1 1573.2,944.0 C1579.6,947.0 1588.9,948.8 1595.1,950.9 C1601.2,952.9 1610.1,955.0 1610.1,956.3 C1610.1,957.7 1601.2,958.4 1595.1,959.1 C1588.9,959.8 1576.4,961.6 1573.2,960.4 C1570.0,959.3 1577.8,954.5 1576.0,952.2 C1574.1,950.0 1567.3,949.5 1562.3,946.8 C1557.3,944.0 1551.8,938.4 1545.9,935.8 C1540.0,933.3 1533.2,932.4 1526.8,931.7 C1520.4,931.1 1513.6,930.8 1507.7,931.7 C1501.7,932.7 1492.2,937.9 1491.3,937.2Z"/><path d="M1608.7,976.8 C1609.2,975.9 1619.2,977.3 1622.4,975.5 C1625.6,973.6 1628.3,968.4 1627.9,965.9 C1627.4,963.4 1617.9,961.1 1619.7,960.4 C1621.5,959.8 1632.4,961.1 1638.8,961.8 C1645.2,962.5 1652.5,962.7 1657.9,964.5 C1663.4,966.4 1668.4,970.5 1671.6,972.7 C1674.8,975.0 1678.9,977.1 1677.0,978.2 C1675.2,979.3 1665.7,979.1 1660.7,979.6 C1655.6,980.0 1650.2,979.8 1647.0,980.9 C1643.8,982.1 1643.8,986.8 1641.5,986.4 C1639.3,985.9 1637.0,979.1 1633.3,978.2 C1629.7,977.3 1623.8,981.2 1619.7,980.9 C1615.6,980.7 1608.3,977.7 1608.7,976.8Z"/><path d="M1563.7,979.6 C1565.0,978.7 1572.1,977.7 1576.0,978.2 C1579.8,978.7 1586.4,980.9 1586.9,982.3 C1587.3,983.7 1581.9,986.2 1578.7,986.4 C1575.5,986.6 1570.3,984.8 1567.8,983.7 C1565.3,982.5 1562.3,980.5 1563.7,979.6Z"/><path d="M1690.7,978.2 L1707.1,978.2 L1707.1,983.7 L1690.7,983.7Z"/><path d="M1564.6,897.3 C1564.9,895.9 1566.5,894.9 1567.5,895.9 C1568.5,896.9 1569.6,900.5 1570.4,903.2 C1571.3,905.9 1572.8,910.4 1572.6,912.0 C1572.5,913.6 1570.9,914.0 1569.7,912.7 C1568.5,911.5 1566.2,907.2 1565.3,904.7 C1564.5,902.1 1564.2,898.8 1564.6,897.3Z"/><path d="M1511.7,935.8 C1512.6,935.4 1515.3,935.9 1515.8,936.7 C1516.3,937.4 1515.6,939.8 1514.8,940.2 C1513.9,940.7 1511.4,940.1 1510.9,939.4 C1510.4,938.7 1510.9,936.3 1511.7,935.8Z"/><path d="M1938.6,325.9 C1942.1,324.6 1961.0,324.6 1965.2,325.9 C1969.5,327.1 1965.7,331.3 1963.9,333.3 C1962.1,335.4 1957.9,338.1 1954.6,338.1 C1951.3,338.1 1946.6,335.4 1943.9,333.3 C1941.3,331.3 1935.0,327.1 1938.6,325.9Z"/><path d="M2300.0,877.1 C2298.6,878.2 2294.5,880.1 2291.8,883.9 C2289.1,887.8 2286.3,894.9 2283.6,900.3 C2280.9,905.8 2278.6,911.3 2275.4,916.7 C2272.2,922.2 2266.8,928.6 2264.5,933.1 C2262.2,937.7 2261.3,940.4 2261.7,944.0 C2262.2,947.7 2265.8,950.4 2267.2,955.0 C2268.6,959.5 2269.7,965.9 2269.9,971.4 C2270.2,976.8 2269.5,982.3 2268.6,987.8 C2267.7,993.2 2266.1,998.7 2264.5,1004.2 C2262.9,1009.6 2259.0,1015.5 2259.0,1020.5 C2259.0,1025.6 2263.6,1029.7 2264.5,1034.2 C2265.4,1038.8 2263.1,1043.3 2264.5,1047.9 C2265.8,1052.4 2268.6,1057.4 2272.7,1061.5 C2276.8,1065.6 2284.5,1069.7 2289.1,1072.5 C2293.6,1075.2 2298.2,1077.0 2300.0,1077.9 L2300,1080 L2300,877Z"/><path d="M1559.8,880.0 a2.2,1.8 0 1,0 4.4,0 a2.2,1.8 0 1,0 -4.4,0Z"/><path d="M1568.2,876.0 a1.8,1.4 0 1,0 3.6,0 a1.8,1.4 0 1,0 -3.6,0Z"/><path d="M1576.0,885.0 a2,1.6 0 1,0 4,0 a2,1.6 0 1,0 -4,0Z"/><path d="M1584.4,906.0 a1.6,1.3 0 1,0 3.2,0 a1.6,1.3 0 1,0 -3.2,0Z"/><path d="M1598.2,928.0 a1.8,1.4 0 1,0 3.6,0 a1.8,1.4 0 1,0 -3.6,0Z"/><path d="M1610.4,934.0 a1.6,1.3 0 1,0 3.2,0 a1.6,1.3 0 1,0 -3.2,0Z"/><path d="M1622.4,940.0 a1.6,1.3 0 1,0 3.2,0 a1.6,1.3 0 1,0 -3.2,0Z"/><path d="M1634.0,946.0 a2,1.6 0 1,0 4,0 a2,1.6 0 1,0 -4,0Z"/><path d="M1740.0,993.0 a2,1.6 0 1,0 4,0 a2,1.6 0 1,0 -4,0Z"/><path d="M1750.0,1008.0 a2,1.6 0 1,0 4,0 a2,1.6 0 1,0 -4,0Z"/><path d="M1756.0,1022.0 a2,1.6 0 1,0 4,0 a2,1.6 0 1,0 -4,0Z"/><path d="M1759.0,1036.0 a2,1.6 0 1,0 4,0 a2,1.6 0 1,0 -4,0Z"/><path d="M1755.4,1052.0 a1.6,1.3 0 1,0 3.2,0 a1.6,1.3 0 1,0 -3.2,0Z"/><path d="M1775.4,1040.0 a1.6,1.3 0 1,0 3.2,0 a1.6,1.3 0 1,0 -3.2,0Z"/><path d="M1750.4,1064.0 a1.6,1.3 0 1,0 3.2,0 a1.6,1.3 0 1,0 -3.2,0Z"/><path d="M1654.6,1052.0 a2.4,1.9 0 1,0 4.8,0 a2.4,1.9 0 1,0 -4.8,0Z"/><path d="M1670.4,1056.0 a1.6,1.3 0 1,0 3.2,0 a1.6,1.3 0 1,0 -3.2,0Z"/><path d="M2160.6,727.0 a2.4,1.9 0 1,0 4.8,0 a2.4,1.9 0 1,0 -4.8,0Z"/><path d="M2168.0,739.0 a1,0.8 0 1,0 2,0 a1,0.8 0 1,0 -2,0Z"/><path d="M2259.0,797.0 a2,1.6 0 1,0 4,0 a2,1.6 0 1,0 -4,0Z"/><path d="M2247.8,851.0 a2.2,1.8 0 1,0 4.4,0 a2.2,1.8 0 1,0 -4.4,0Z"/><path d="M2263.0,855.0 a3,2.4 0 1,0 6,0 a3,2.4 0 1,0 -6,0Z"/><path d="M2274.5,860.0 a2.5,2.0 0 1,0 5.0,0 a2.5,2.0 0 1,0 -5.0,0Z"/><path d="M2293.0,854.0 a3,2.4 0 1,0 6,0 a3,2.4 0 1,0 -6,0Z"/><path d="M2165.6,995.0 a2.4,1.9 0 1,0 4.8,0 a2.4,1.9 0 1,0 -4.8,0Z"/><path d="M2176.4,1001.0 a1.6,1.3 0 1,0 3.2,0 a1.6,1.3 0 1,0 -3.2,0Z"/><path d="M2192.6,999.0 a1.4,1.1 0 1,0 2.8,0 a1.4,1.1 0 1,0 -2.8,0Z"/><path d="M2193.0,1006.0 a2,1.6 0 1,0 4,0 a2,1.6 0 1,0 -4,0Z"/><path d="M2183.8,1017.0 a2.2,1.8 0 1,0 4.4,0 a2.2,1.8 0 1,0 -4.4,0Z"/><path d="M2174.2,1020.0 a1.8,1.4 0 1,0 3.6,0 a1.8,1.4 0 1,0 -3.6,0Z"/><path d="M2105.5,1112.0 a1.5,1.2 0 1,0 3.0,0 a1.5,1.2 0 1,0 -3.0,0Z"/><path d="M2144.0,1123.0 a2,1.6 0 1,0 4,0 a2,1.6 0 1,0 -4,0Z"/></g>
<g fill="#aad3df"><path d="M1376.1,317.1 C1350.0,322.1 1375.9,349.3 1376.4,355.2 C1376.9,361.0 1377.4,360.2 1379.8,361.0 C1382.2,361.9 1392.0,359.8 1394.4,361.8 C1396.9,363.7 1397.0,371.9 1398.1,375.7 C1399.2,379.5 1401.9,387.5 1402.5,390.4 C1403.1,393.2 1400.6,396.6 1402.8,396.9 C1404.9,397.3 1415.0,392.5 1418.6,392.8 C1422.3,393.1 1427.0,397.8 1430.4,399.1 C1433.7,400.5 1440.0,400.9 1443.5,402.8 C1447.1,404.8 1453.0,411.2 1456.7,413.8 C1460.4,416.4 1467.7,420.2 1471.4,422.6 C1475.1,424.9 1481.8,429.8 1484.6,431.4 C1487.3,433.0 1489.0,433.9 1491.9,434.3 C1494.8,434.7 1502.9,433.9 1506.6,434.3 C1510.2,434.7 1517.4,435.3 1519.0,437.3 C1520.7,439.2 1519.2,446.6 1519.0,449.0 C1518.8,451.3 1517.4,452.5 1517.6,454.8 C1517.8,457.2 1520.2,463.4 1520.5,466.6 C1520.8,469.7 1518.7,474.8 1519.8,478.3 C1520.8,481.8 1526.0,489.4 1528.5,492.9 C1531.1,496.5 1536.5,502.1 1538.8,504.7 C1541.2,507.2 1544.2,512.0 1546.1,512.0 C1548.1,512.0 1551.5,507.4 1553.5,504.7 C1555.4,501.9 1560.2,495.6 1560.8,491.5 C1561.4,487.4 1558.8,478.6 1557.9,473.9 C1556.9,469.2 1554.6,460.2 1553.5,456.3 C1552.3,452.4 1547.9,447.1 1549.1,444.6 C1550.2,442.0 1559.1,439.4 1562.3,437.3 C1565.4,435.1 1570.0,431.4 1572.5,428.5 C1575.1,425.5 1579.8,419.2 1581.3,415.3 C1582.8,411.4 1583.9,403.6 1583.5,399.1 C1583.1,394.6 1580.2,385.5 1578.4,381.6 C1576.5,377.6 1571.9,372.4 1569.6,369.8 C1567.2,367.3 1561.4,364.7 1560.8,362.5 C1560.2,360.4 1563.8,356.1 1565.2,353.7 C1566.6,351.4 1569.8,347.7 1571.1,344.9 C1572.3,342.2 1574.5,336.9 1574.7,333.2 C1574.9,329.5 1599.0,319.2 1572.5,317.1 C1546.0,314.9 1402.3,312.0 1376.1,317.1Z"/><path d="M1662.5,320.0 C1653.8,324.9 1664.7,341.3 1667.8,349.3 C1670.9,357.3 1678.0,364.4 1681.1,368.0 C1684.2,371.5 1683.4,372.0 1686.5,370.6 C1689.6,369.3 1696.2,364.4 1699.8,360.0 C1703.3,355.5 1704.7,349.3 1707.8,344.0 C1710.9,338.7 1716.4,332.0 1718.4,328.0 C1720.4,324.0 1729.1,321.3 1719.8,320.0 C1710.4,318.7 1671.1,315.1 1662.5,320.0Z"/><path d="M1406.4,588.9 C1407.0,587.4 1413.7,581.0 1416.6,578.6 C1419.6,576.3 1425.2,573.3 1428.4,571.3 C1431.5,569.3 1437.6,566.1 1440.1,564.0 C1442.6,561.8 1445.7,556.9 1447.4,555.2 C1449.2,553.4 1451.3,551.0 1453.3,550.8 C1455.2,550.6 1459.5,553.1 1462.1,553.7 C1464.6,554.3 1470.6,553.8 1472.3,555.2 C1474.1,556.5 1473.9,562.2 1475.3,564.0 C1476.6,565.7 1480.7,567.8 1482.6,568.4 C1484.5,569.0 1488.4,567.4 1489.2,568.4 C1490.0,569.3 1488.0,574.1 1488.5,575.7 C1488.9,577.3 1492.5,578.3 1492.9,580.1 C1493.2,581.8 1492.2,587.3 1491.4,588.9 C1490.6,590.4 1488.4,591.8 1487.0,591.8 C1485.6,591.8 1482.9,589.1 1481.1,588.9 C1479.4,588.7 1475.9,589.9 1473.8,590.4 C1471.7,590.8 1467.0,592.5 1465.0,592.5 C1463.1,592.5 1461.1,591.2 1459.1,590.4 C1457.2,589.5 1451.1,587.7 1450.4,586.0 C1449.6,584.2 1453.9,577.7 1453.3,577.2 C1452.7,576.6 1447.9,580.6 1446.0,581.6 C1444.0,582.5 1441.0,583.5 1438.6,584.5 C1436.3,585.5 1430.7,588.1 1428.4,588.9 C1426.0,589.7 1423.2,590.3 1421.0,590.4 C1418.9,590.4 1414.2,589.8 1412.2,589.6 C1410.3,589.4 1405.8,590.4 1406.4,588.9Z"/><path d="M1459.1,615.3 C1459.9,612.2 1461.8,609.4 1464.3,607.2 C1466.7,605.0 1470.5,603.3 1473.8,602.1 C1477.1,600.9 1481.1,599.9 1484.1,599.9 C1487.0,599.9 1491.0,601.1 1491.4,602.1 C1491.8,603.1 1487.6,604.0 1486.3,605.7 C1484.9,607.4 1484.7,610.3 1483.3,612.3 C1482.0,614.4 1479.5,616.0 1478.2,618.2 C1476.9,620.4 1475.9,622.3 1475.3,625.5 C1474.7,628.7 1474.3,632.9 1474.5,637.3 C1474.8,641.6 1475.6,647.0 1476.7,651.9 C1477.8,656.8 1481.4,663.1 1481.1,666.6 C1480.9,670.0 1477.5,672.4 1475.3,672.4 C1473.1,672.4 1469.6,670.0 1467.9,666.6 C1466.2,663.1 1466.0,656.8 1465.0,651.9 C1464.0,647.0 1462.9,641.6 1462.1,637.3 C1461.2,632.9 1460.4,629.2 1459.9,625.5 C1459.4,621.9 1458.4,618.3 1459.1,615.3Z"/><path d="M1491.4,602.1 C1492.8,601.2 1498.9,598.1 1501.6,597.7 C1504.4,597.3 1509.0,598.7 1511.9,599.1 C1514.8,599.6 1520.5,600.8 1523.6,601.3 C1526.8,601.9 1533.0,602.3 1535.4,603.5 C1537.7,604.8 1539.7,608.7 1541.2,610.9 C1542.8,613.0 1546.9,617.7 1547.1,619.7 C1547.3,621.6 1544.2,625.3 1542.7,625.5 C1541.1,625.7 1537.3,622.5 1535.4,621.1 C1533.4,619.8 1529.6,616.2 1528.0,615.3 C1526.5,614.3 1523.8,612.8 1523.6,613.8 C1523.4,614.8 1526.4,620.2 1526.6,622.6 C1526.8,624.9 1525.4,629.0 1525.1,631.4 C1524.8,633.7 1525.1,638.2 1524.4,640.2 C1523.6,642.1 1520.1,646.0 1519.2,646.0 C1518.4,646.0 1518.7,641.4 1517.8,640.2 C1516.8,639.0 1513.5,637.4 1511.9,637.3 C1510.3,637.1 1507.6,638.7 1506.0,638.7 C1504.5,638.7 1500.8,638.2 1500.2,637.3 C1499.6,636.3 1500.7,633.0 1501.6,631.4 C1502.6,629.8 1506.5,627.7 1507.5,625.5 C1508.5,623.4 1509.4,617.6 1509.0,615.3 C1508.6,612.9 1506.1,609.2 1504.6,607.9 C1503.0,606.7 1499.0,606.2 1497.3,605.7 C1495.5,605.3 1492.2,604.8 1491.4,604.3 C1490.6,603.8 1490.0,603.0 1491.4,602.1Z"/><path d="M1506.0,666.6 C1506.0,664.7 1508.2,662.2 1510.4,660.7 C1512.6,659.2 1516.1,659.0 1519.2,657.8 C1522.4,656.5 1525.8,654.6 1529.5,653.4 C1533.2,652.2 1537.3,651.4 1541.2,650.4 C1545.1,649.5 1550.1,647.8 1552.9,647.5 C1555.8,647.3 1557.6,648.0 1558.1,649.0 C1558.6,650.0 1558.0,651.7 1555.9,653.4 C1553.8,655.1 1549.0,657.3 1545.6,659.2 C1542.2,661.2 1538.5,663.4 1535.4,665.1 C1532.2,666.8 1529.5,668.3 1526.6,669.5 C1523.6,670.7 1520.5,672.1 1517.8,672.4 C1515.1,672.8 1512.4,672.7 1510.4,671.7 C1508.5,670.7 1506.0,668.4 1506.0,666.6Z"/><path d="M1547.8,643.1 C1547.3,641.9 1550.4,638.7 1552.9,637.3 C1555.5,635.8 1559.5,635.3 1563.2,634.3 C1566.9,633.3 1571.3,632.2 1574.9,631.4 C1578.6,630.5 1582.7,628.9 1585.2,629.2 C1587.6,629.4 1589.3,631.3 1589.6,632.9 C1589.8,634.4 1588.6,637.0 1586.7,638.7 C1584.7,640.4 1581.0,642.1 1577.9,643.1 C1574.7,644.1 1571.3,644.3 1567.6,644.6 C1563.9,644.8 1559.2,644.8 1555.9,644.6 C1552.6,644.3 1548.3,644.3 1547.8,643.1Z"/><path d="M1327.4,463.3 C1328.8,461.2 1332.5,460.5 1334.9,460.8 C1337.3,461.0 1339.6,462.3 1341.6,464.9 C1343.5,467.6 1344.9,471.9 1346.6,476.6 C1348.2,481.3 1349.9,488.5 1351.6,493.2 C1353.2,498.0 1355.3,501.3 1356.6,504.9 C1357.8,508.5 1359.1,511.6 1359.1,514.9 C1359.1,518.2 1357.8,523.0 1356.6,524.9 C1355.3,526.8 1352.5,528.5 1351.6,526.6 C1350.6,524.6 1351.6,517.4 1350.7,513.2 C1349.9,509.1 1348.4,504.9 1346.6,501.6 C1344.8,498.2 1342.4,496.6 1339.9,493.2 C1337.4,489.9 1333.8,484.9 1331.6,481.6 C1329.3,478.3 1327.3,476.3 1326.6,473.3 C1325.9,470.2 1326.0,465.3 1327.4,463.3Z"/><path d="M1190.8,363.3 C1190.5,361.6 1195.7,356.6 1198.3,353.3 C1200.9,350.0 1203.6,344.8 1206.6,343.3 C1209.7,341.8 1212.7,343.6 1216.6,344.2 C1220.5,344.7 1225.5,345.7 1230.0,346.7 C1234.4,347.6 1242.7,349.3 1243.3,350.0 C1243.8,350.7 1237.2,350.4 1233.3,350.8 C1229.4,351.2 1224.1,351.7 1220.0,352.5 C1215.8,353.3 1211.6,354.0 1208.3,355.8 C1205.0,357.6 1202.9,362.1 1200.0,363.3 C1197.1,364.6 1191.1,365.0 1190.8,363.3Z"/><path d="M1175.0,360.8 C1175.4,359.1 1180.3,358.7 1181.6,360.0 C1183.0,361.2 1183.7,366.6 1183.3,368.3 C1182.9,370.0 1180.5,371.2 1179.1,370.0 C1177.8,368.7 1174.6,362.5 1175.0,360.8Z"/><path d="M1286.6,391.6 C1287.0,388.9 1288.5,384.4 1289.9,381.6 C1291.3,378.9 1293.3,375.3 1294.9,375.0 C1296.6,374.7 1299.9,377.2 1299.9,380.0 C1299.9,382.7 1296.0,388.3 1294.9,391.6 C1293.8,395.0 1294.6,397.2 1293.3,400.0 C1291.9,402.7 1288.8,406.1 1286.6,408.3 C1284.4,410.5 1280.8,413.8 1279.9,413.3 C1279.1,412.7 1280.3,407.5 1281.6,405.0 C1282.8,402.5 1286.6,400.5 1287.4,398.3 C1288.3,396.1 1286.2,394.4 1286.6,391.6Z"/><path d="M1274.9,368.3 C1275.9,365.9 1279.8,364.0 1281.6,364.1 C1283.4,364.3 1286.0,367.1 1285.8,369.1 C1285.5,371.2 1281.6,375.1 1279.9,376.6 C1278.3,378.2 1276.6,379.7 1275.8,378.3 C1274.9,376.9 1274.0,370.7 1274.9,368.3Z"/><path d="M1323.2,400.0 C1323.2,398.8 1329.3,397.2 1331.6,395.0 C1333.8,392.7 1335.6,386.9 1336.6,386.6 C1337.5,386.4 1338.2,390.8 1337.4,393.3 C1336.6,395.8 1333.9,400.5 1331.6,401.6 C1329.2,402.7 1323.2,401.1 1323.2,400.0Z"/><path d="M1441.6,534.7 C1441.3,532.2 1443.0,529.9 1444.5,528.8 C1446.0,527.7 1448.9,527.1 1450.4,528.1 C1451.8,529.0 1453.0,532.3 1453.3,534.7 C1453.5,537.0 1453.0,540.5 1451.8,542.0 C1450.6,543.5 1447.7,544.7 1446.0,543.5 C1444.2,542.2 1441.8,537.1 1441.6,534.7Z"/><path d="M1769.0,470.4 C1769.0,469.4 1771.9,465.0 1774.8,463.0 C1777.8,461.1 1783.1,459.8 1786.6,458.6 C1790.0,457.4 1795.4,455.0 1795.4,455.7 C1795.4,456.4 1790.0,460.8 1786.6,463.0 C1783.1,465.2 1777.8,467.7 1774.8,468.9 C1771.9,470.1 1769.0,471.3 1769.0,470.4Z"/><path d="M1710.4,457.2 C1711.8,454.0 1718.9,449.6 1722.1,449.8 C1725.3,450.1 1729.9,456.2 1729.4,458.6 C1728.9,461.1 1721.8,462.8 1719.1,464.5 C1716.5,466.2 1714.7,470.1 1713.3,468.9 C1711.8,467.7 1708.9,460.3 1710.4,457.2Z"/><path d="M1636.6,1071.9 C1637.0,1069.6 1639.6,1068.7 1641.0,1069.7 C1642.3,1070.7 1644.4,1075.2 1644.8,1077.9 C1645.3,1080.7 1644.7,1085.2 1643.7,1086.1 C1642.7,1087.0 1640.0,1085.8 1638.8,1083.4 C1637.6,1081.0 1636.2,1074.2 1636.6,1071.9Z"/><path d="M1571.9,465.3 C1573.6,463.4 1582.1,459.8 1587.8,458.6 C1593.6,457.4 1605.6,456.7 1606.5,458.1 C1607.4,459.4 1598.1,464.6 1593.2,466.6 C1588.3,468.5 1580.7,470.0 1577.2,469.8 C1573.6,469.6 1570.1,467.1 1571.9,465.3Z"/><path d="M1614.5,517.2 C1615.2,514.7 1621.5,508.8 1623.8,507.9 C1626.1,507.0 1629.0,509.4 1628.4,511.9 C1627.7,514.4 1622.1,522.2 1619.8,523.1 C1617.5,524.0 1613.8,519.8 1614.5,517.2Z"/><path d="M1169.1,670.5 C1169.6,669.1 1171.4,667.6 1173.1,669.1 C1174.9,670.7 1179.4,677.4 1179.8,679.8 C1180.2,682.3 1177.4,684.3 1175.8,683.8 C1174.2,683.4 1171.6,679.4 1170.5,677.1 C1169.4,674.9 1168.7,671.8 1169.1,670.5Z"/><path d="M1533.1,872.4 C1533.6,871.4 1536.6,870.5 1537.5,871.0 C1538.3,871.4 1538.7,874.4 1538.2,875.4 C1537.7,876.3 1535.4,877.3 1534.5,876.8 C1533.7,876.3 1532.6,873.4 1533.1,872.4Z"/><path d="M1477.6,1054.7 C1478.5,1054.2 1486.2,1058.3 1488.5,1060.2 C1490.8,1062.0 1492.2,1065.2 1491.3,1065.6 C1490.3,1066.1 1485.3,1064.7 1483.1,1062.9 C1480.8,1061.1 1476.7,1055.2 1477.6,1054.7Z"/></g>
<g fill="#aad3df" opacity="0.55"><path d="M1306.6,469.9 C1308.0,467.1 1314.4,464.9 1316.6,466.6 C1318.8,468.3 1319.6,475.5 1319.9,479.9 C1320.2,484.4 1317.7,489.4 1318.2,493.2 C1318.8,497.1 1321.0,500.2 1323.2,503.2 C1325.5,506.3 1328.8,508.5 1331.6,511.6 C1334.3,514.6 1338.5,518.8 1339.9,521.6 C1341.3,524.3 1340.9,527.0 1339.9,528.2 C1338.9,529.5 1335.7,530.7 1334.1,529.1 C1332.4,527.4 1332.3,521.7 1329.9,518.2 C1327.5,514.8 1322.4,512.1 1319.9,508.2 C1317.4,504.4 1316.9,499.1 1314.9,494.9 C1313.0,490.7 1309.6,487.4 1308.2,483.3 C1306.9,479.1 1305.2,472.7 1306.6,469.9Z"/></g>
<path fill="#f2efe9" d="M1520.5,477.6 C1520.7,476.5 1523.5,474.3 1525.6,473.9 C1527.7,473.5 1531.0,473.9 1532.9,475.4 C1534.9,476.8 1537.6,481.3 1537.3,482.7 C1537.1,484.0 1533.7,483.8 1531.5,483.4 C1529.3,483.1 1526.0,481.5 1524.2,480.5 C1522.3,479.5 1520.2,478.7 1520.5,477.6Z"/>
<path fill="#f2efe9" opacity="0.45" d="M1544.7,402.1 C1545.2,400.1 1547.8,398.2 1550.5,399.1 C1553.2,400.1 1559.3,405.0 1560.8,407.9 C1562.3,410.9 1561.0,414.3 1559.3,416.7 C1557.6,419.2 1553.0,422.1 1550.5,422.6 C1548.1,423.1 1545.2,421.6 1544.7,419.7 C1544.2,417.7 1547.6,413.8 1547.6,410.9 C1547.6,407.9 1544.2,404.0 1544.7,402.1Z"/>
<g fill="#aad3df" opacity="0.5"><ellipse cx="1165" cy="352" rx="5" ry="3"/><ellipse cx="1182" cy="372" rx="4" ry="6"/><ellipse cx="1215" cy="365" rx="6" ry="3"/><ellipse cx="1236" cy="356" rx="4" ry="2.5"/><ellipse cx="1240" cy="420" rx="5" ry="3"/><ellipse cx="1262" cy="437" rx="6" ry="3"/><ellipse cx="1225" cy="408" rx="4" ry="3"/><ellipse cx="1330" cy="420" rx="6" ry="3"/><ellipse cx="1338" cy="395" rx="3" ry="5"/><ellipse cx="1322" cy="402" rx="4" ry="5"/><ellipse cx="1372" cy="470" rx="5" ry="3"/><ellipse cx="1385" cy="452" rx="7" ry="2.5"/><ellipse cx="1330" cy="472" rx="5" ry="2"/><ellipse cx="1390" cy="482" rx="5" ry="2"/><ellipse cx="1470" cy="436" rx="3" ry="5"/><ellipse cx="1585" cy="452" rx="9" ry="4"/><ellipse cx="1600" cy="470" rx="8" ry="3"/><ellipse cx="1625" cy="455" rx="10" ry="4"/><ellipse cx="1660" cy="448" rx="8" ry="3"/><ellipse cx="1700" cy="455" rx="10" ry="6"/><ellipse cx="1668" cy="470" rx="5" ry="6"/><ellipse cx="1720" cy="440" rx="5" ry="3"/><ellipse cx="1640" cy="395" rx="5" ry="3"/><ellipse cx="1610" cy="385" rx="4" ry="2.5"/><ellipse cx="1672" cy="590" rx="4" ry="2"/><ellipse cx="1560" cy="555" rx="5" ry="3"/><ellipse cx="1532" cy="580" rx="4" ry="2"/><ellipse cx="1305" cy="560" rx="3" ry="2"/><ellipse cx="1480" cy="532" rx="4" ry="2.5"/></g>
<g fill="none" stroke="#c9a9c4" stroke-width="1.7" stroke-linejoin="round"><path d="M1057.2,550.5 L1370.7,550.7 L1371.9,542.4 L1374.9,542.4 L1377.4,552.4 L1381.5,555.7 L1394.9,558.2 L1409.9,564.9 L1421.5,563.2 L1433.2,566.5 L1449.3,562.5 L1465.2,571.9 L1486.6,583.9 L1491.9,591.9 L1502.6,598.5 L1513.2,607.8 L1518.6,621.2 L1519.9,645.2 L1510.6,661.2 L1513.2,667.8 L1521.2,666.5 L1539.9,657.2 L1555.9,651.8 L1555.9,643.8 L1566.5,638.5 L1582.5,637.2 L1582.5,638.2 L1586.9,630.9 L1603.0,616.2 L1641.1,616.2 L1642.6,612.5 L1651.4,608.9 L1657.3,591.3 L1666.8,576.6 L1670.4,581.0 L1677.8,578.4 L1684.4,582.5 L1684.4,607.4 L1691.0,615.5"/><path d="M850.6,326.7 L862.6,328.0 L870.6,333.3 L880.0,345.3 L890.6,357.3 L902.6,345.3 L913.3,338.1 L919.9,350.7 L937.3,368.0 L955.9,406.6 L975.9,420.7 L975.9,434.6 L969.2,443.9"/><path d="M1123.8,799.2 L1148.4,797.9 L1190.7,815.6 L1223.5,815.6 L1223.5,810.2 L1244.0,810.2 L1261.7,826.6 L1267.2,840.2 L1280.9,847.0 L1289.1,837.5 L1300.0,836.9 L1300.0,837.5 L1310.9,851.1 L1319.1,864.8 L1327.3,878.5 L1338.3,885.3 L1349.2,886.7"/><path d="M1420.2,985.0 L1439.3,984.5 L1451.6,975.5"/><path d="M1414.8,993.2 L1427.0,1004.2 L1409.3,1006.9 L1405.2,1023.3"/><path d="M1439.3,984.5 L1439.3,1009.6 L1448.9,1011.0"/><path d="M1431.1,1034.2 L1439.3,1023.3 L1447.5,1013.7"/><path d="M1439.3,1023.3 L1455.7,1034.2 L1463.9,1042.4 L1474.9,1031.5 L1491.3,1021.9 L1507.7,1019.2"/><path d="M1480.3,1064.3 L1491.3,1067.0 L1500.8,1069.7"/><path d="M1511.7,1082.0 L1513.1,1094.3"/><path d="M1641.5,1057.4 L1627.9,1067.0 L1622.4,1086.1 L1627.9,1093.0"/><path d="M1640.2,963.2 L1638.8,976.8 L1641.5,986.4"/><path d="M2261.7,944.0 L2289.1,942.7 L2290.4,952.2 L2298.6,953.6"/><path d="M2298.6,911.3 L2291.8,930.4 L2290.4,942.7"/><path d="M2267.2,1005.5 L2283.6,1001.4 L2298.6,1005.5"/><path d="M2264.5,1036.9 L2280.9,1034.2 L2298.6,1036.9"/><path d="M2264.5,1042.4 L2283.6,1039.7 L2298.6,1043.8"/><path d="M2267.2,1050.6 L2286.3,1047.9 L2298.6,1045.1"/><path d="M2280.9,1067.0 L2289.1,1060.2 L2298.6,1057.4"/></g>
</g>
<g filter="url(#mb2)">
<text x="1458.3" y="336.2" text-anchor="middle" font-family="Liberation Sans, sans-serif" font-size="20" font-weight="400" font-style="italic" textLength="67.5" lengthAdjust="spacing" fill="#4a70b8" stroke="#fff" stroke-opacity="0.7" stroke-width="2.4" paint-order="stroke" letter-spacing="0">Hudson</text>
<text x="1458.5" y="359.8" text-anchor="middle" font-family="Liberation Sans, sans-serif" font-size="20" font-weight="400" font-style="italic" textLength="33" lengthAdjust="spacing" fill="#4a70b8" stroke="#fff" stroke-opacity="0.7" stroke-width="2.4" paint-order="stroke" letter-spacing="0">Bay</text>
<text x="1854.5" y="448.3" text-anchor="middle" font-family="Liberation Sans, sans-serif" font-size="20" font-weight="400" font-style="italic" textLength="83" lengthAdjust="spacing" fill="#4a70b8" stroke="#fff" stroke-opacity="0.7" stroke-width="2.4" paint-order="stroke" letter-spacing="0">Labrador</text>
<text x="1854.6" y="472.3" text-anchor="middle" font-family="Liberation Sans, sans-serif" font-size="20" font-weight="400" font-style="italic" textLength="32" lengthAdjust="spacing" fill="#4a70b8" stroke="#fff" stroke-opacity="0.7" stroke-width="2.4" paint-order="stroke" letter-spacing="0">Sea</text>
<text x="1326.6" y="733.4" text-anchor="middle" font-family="Liberation Sans, sans-serif" font-size="20.5" font-weight="400" textLength="138" lengthAdjust="spacing" fill="#6b4a70" stroke="#fff" stroke-opacity="0.7" stroke-width="2.4" paint-order="stroke" letter-spacing="0">United States</text>
<text x="1290.3" y="919.2" text-anchor="middle" font-family="Liberation Sans, sans-serif" font-size="20.5" font-weight="400" textLength="71.5" lengthAdjust="spacing" fill="#6b4a70" stroke="#fff" stroke-opacity="0.7" stroke-width="2.4" paint-order="stroke" letter-spacing="0">México</text>
</g>
<path d="M1440.9,651.8 L1440.90,611.80 A40,40 0 1 1 1432.58,612.67Z" fill="#336600"/><path d="M1440.9,651.8 L1432.58,612.67 A40,40 0 0 1 1440.90,611.80Z" fill="#ffcc00"/><circle cx="1440.9" cy="651.8" r="26" fill="#ffcc00"/><text x="1440.9" y="660.4" text-anchor="middle" font-family="Liberation Sans, sans-serif" font-size="24" fill="#fff" stroke="#fff" stroke-width="0.3" textLength="37" lengthAdjust="spacing">117</text>
<path d="M1591.1,719.9 L1591.10,679.90 A40,40 0 0 1 1591.10,759.90Z" fill="#336600"/><path d="M1591.1,719.9 L1591.10,759.90 A40,40 0 0 1 1589.01,679.95Z" fill="#ffcc00"/><path d="M1591.1,719.9 L1589.01,679.95 A40,40 0 0 1 1591.10,679.90Z" fill="#ff9900"/><circle cx="1591.1" cy="719.9" r="26" fill="#ff9900"/><text x="1591.1" y="728.5" text-anchor="middle" font-family="Liberation Sans, sans-serif" font-size="24" fill="#fff" stroke="#fff" stroke-width="0.3" textLength="37" lengthAdjust="spacing">111</text>
</svg>
  <div class="abs" style="left:0;top:767px;width:533px;height:33px;background:rgba(255,255,255,.7)"></div>
  <div class="abs" style="left:9.7px;top:773px;width:20px;height:20px;background:#336600"></div><div class="abs" style="left:34.6px;top:767px;font-size:22px;line-height:33px;color:#333">Normal</div><div class="abs" style="left:116.9px;top:773px;width:20px;height:20px;background:#ffcc00"></div><div class="abs" style="left:142.0px;top:767px;font-size:22px;line-height:33px;color:#333">Warning</div><div class="abs" style="left:234.2px;top:773px;width:20px;height:20px;background:#ff9900"></div><div class="abs" style="left:259.4px;top:767px;font-size:22px;line-height:33px;color:#333">Minor</div><div class="abs" style="left:326.0px;top:773px;width:20px;height:20px;background:#ff3300"></div><div class="abs" style="left:351.4px;top:767px;font-size:22px;line-height:33px;color:#333">Major</div><div class="abs" style="left:418.0px;top:773px;width:20px;height:20px;background:#cc0000"></div><div class="abs" style="left:443.2px;top:767px;font-size:22px;line-height:33px;color:#333">Critical</div>
  <div class="abs" style="right:0;top:767px;height:33px;line-height:33px;padding:0 10px 0 10px;background:rgba(255,255,255,.7);font-size:22px;color:#333;letter-spacing:0.08px"><span style="color:#0078a8">Leaflet</span> | Map data © <span style="color:#0078a8">OpenStreetMap</span> contributors under <span style="color:#0078a8">ODbL</span>, <span style="color:#0078a8">CC BY-SA 2.0</span></div>
 </div>
</div>
<div class="card" style="left:807px;top:1160px;width:1493px;height:704px">
 <div class="hd"><span style="letter-spacing:-0.26px;">Availability Over the Past 24 Hours</span></div>
 <div class="atab">
 <div class="ahead"><div class="c1"><span style="letter-spacing:0.13px;">Categories</span></div><div class="c2"><span style="letter-spacing:0.14px;">Outages</span></div><div class="c3"><span style="letter-spacing:-0.26px;">Availability</span></div></div>
 <div class="arow"><div class="c1"><span class="lnk"><span style="letter-spacing:0.33px;">Network Interfaces</span></span></div><div class="c2" style="background:#d9e1cf"><div class="bar" style="background:#99be71"></div><span class="lnk"><span style="letter-spacing:0.97px;">0 of 302</span></span></div><div class="c3" style="background:#fef3cd"><div class="bar" style="background:#fed358"></div><span class="lnk"><span style="letter-spacing:0.88px;">99.504%</span></span></div></div>
 <div class="arow"><div class="c1"><span class="lnk"><span style="letter-spacing:-0.46px;">Web Servers</span></span></div><div class="c2" style="background:#d9e1cf"><div class="bar" style="background:#99be71"></div><span class="lnk"><span style="letter-spacing:0.45px;">0 of 134</span></span></div><div class="c3" style="background:#fef3cd"><div class="bar" style="background:#fed358"></div><span class="lnk"><span style="letter-spacing:0.40px;">98.779%</span></span></div></div>
 <div class="arow"><div class="c1"><span class="lnk"><span style="letter-spacing:-0.34px;">Email Servers</span></span></div><div class="c2" style="background:#d9e1cf"><div class="bar" style="background:#99be71"></div><span class="lnk"><span style="letter-spacing:1.04px;">0 of 0</span></span></div><div class="c3" style="background:#d9e1cf"><div class="bar" style="background:#99be71"></div><span class="lnk"><span style="letter-spacing:0.38px;">100.000%</span></span></div></div>
 <div class="arow"><div class="c1"><span class="lnk"><span style="letter-spacing:-0.48px;">DNS and DHCP Servers</span></span></div><div class="c2" style="background:#d9e1cf"><div class="bar" style="background:#99be71"></div><span class="lnk"><span style="letter-spacing:1.04px;">0 of 0</span></span></div><div class="c3" style="background:#d9e1cf"><div class="bar" style="background:#99be71"></div><span class="lnk"><span style="letter-spacing:0.38px;">100.000%</span></span></div></div>
 <div class="arow"><div class="c1"><span class="lnk"><span style="letter-spacing:-0.05px;">Database Servers</span></span></div><div class="c2" style="background:#d9e1cf"><div class="bar" style="background:#99be71"></div><span class="lnk"><span style="letter-spacing:1.04px;">0 of 0</span></span></div><div class="c3" style="background:#d9e1cf"><div class="bar" style="background:#99be71"></div><span class="lnk"><span style="letter-spacing:0.38px;">100.000%</span></span></div></div>
 <div class="arow"><div class="c1"><span class="lnk"><span style="letter-spacing:-0.15px;">JMX Servers</span></span></div><div class="c2" style="background:#d9e1cf"><div class="bar" style="background:#99be71"></div><span class="lnk"><span style="letter-spacing:1.04px;">0 of 0</span></span></div><div class="c3" style="background:#d9e1cf"><div class="bar" style="background:#99be71"></div><span class="lnk"><span style="letter-spacing:0.38px;">100.000%</span></span></div></div>
 <div class="arow"><div class="c1"><span class="lnk"><span style="letter-spacing:0.08px;">Other Servers</span></span></div><div class="c2" style="background:#d9e1cf"><div class="bar" style="background:#99be71"></div><span class="lnk"><span style="letter-spacing:0.81px;">0 of 7</span></span></div><div class="c3" style="background:#d9e1cf"><div class="bar" style="background:#99be71"></div><span class="lnk"><span style="letter-spacing:0.38px;">100.000%</span></span></div></div>
 <div class="ahead"><div class="c1"><span style="letter-spacing:-0.30px;">Total</span></div><div class="c2"><span style="letter-spacing:0.14px;">Outages</span></div><div class="c3"><span style="letter-spacing:-0.26px;">Availability</span></div></div>
 <div class="arow"><div class="c1"><span class="lnk"><span style="letter-spacing:-0.08px;">Overall Service Availability</span></span></div><div class="c2" style="background:#fef3cd"><div class="bar" style="background:#fed358"></div><span class="lnk"><span style="letter-spacing:1.22px;">3 of 448</span></span></div><div class="c3" style="background:#fef3cd"><div class="bar" style="background:#fed358"></div><span class="lnk"><span style="letter-spacing:0.15px;">98.631%</span></span></div></div>
 </div>
</div>


<div class="card" style="left:2360px;top:260px;width:716px;height:220px">
 <div class="hd"><span class="lnk"><span style="letter-spacing:0.42px;">Notifications</span></span></div>
 <svg class="abs" style="left:0;top:0" width="60" height="220" viewBox="2362 262 60 220"><path fill="#212529" d="M2387.00,355.70 a5.90,5.90 0 1,0 11.80,0 a5.90,5.90 0 1,0 -11.80,0Z M2388.30,360.40 Q2392.90,363.80 2397.50,360.40 C2401.90,360.60 2403.00,365.40 2403.00,370.20 Q2403.00,373.60 2399.60,373.60 L2386.20,373.60 Q2382.80,373.60 2382.80,370.20 C2382.80,365.40 2383.90,360.60 2388.30,360.40Z"/></svg><svg class="abs" style="left:0;top:0" width="60" height="220" viewBox="2362 262 60 220"><circle cx="2383.9" cy="394" r="4.1" fill="#212529"/><circle cx="2402" cy="394" r="4.1" fill="#212529"/><path fill="#212529" d="M2381,398.3 Q2384,400.6 2386.3,399 Q2385.4,402 2387.3,404.6 Q2385.5,405.6 2384.2,405.8 L2381,405.8 Q2378,405.8 2378,403 Q2378,399 2381,398.3Z"/><path fill="#212529" d="M2404.9,398.3 Q2401.9,400.6 2399.6,399 Q2400.5,402 2398.6,404.6 Q2400.4,405.6 2401.7,405.8 L2404.9,405.8 Q2407.9,405.8 2407.9,403 Q2407.9,399 2404.9,398.3Z"/><path fill="#212529" stroke="#fff" stroke-width="0.9" d="M2386.93,400.02 a6.02,6.02 0 1,0 12.04,0 a6.02,6.02 0 1,0 -12.04,0Z M2388.26,404.81 Q2392.95,408.28 2397.64,404.81 C2402.13,405.02 2403.25,409.91 2403.25,414.81 Q2403.25,418.28 2399.78,418.28 L2386.12,418.28 Q2382.65,418.28 2382.65,414.81 C2382.65,409.91 2383.77,405.02 2388.26,404.81Z"/></svg><svg class="abs" style="left:0;top:0" width="60" height="220" viewBox="2362 262 60 220"><rect x="2380.8" y="436.6" width="24.4" height="22.2" rx="1.6" fill="#fff" stroke="#212529" stroke-width="1.7"/><rect x="2380" y="435.8" width="26" height="5.6" fill="#212529"/><path d="M2380.8,447.2 H2405.2 M2380.8,452.9 H2405.2 M2387,441 V458.8 M2393,441 V458.8 M2399,441 V458.8" stroke="#6b6e72" stroke-width="1.3" fill="none"/><rect x="2385.3" y="432.3" width="3.6" height="7.8" rx="1.8" fill="#fff" stroke="#212529" stroke-width="1.3"/><rect x="2397.3" y="432.3" width="3.6" height="7.8" rx="1.8" fill="#fff" stroke="#212529" stroke-width="1.3"/></svg>
 <div class="abs" style="left:56.5px;top:79.4px"><span style="letter-spacing:-0.85px;">You have</span></div><div class="abs lnk" style="left:180.6px;top:79.4px"><span style="letter-spacing:0.36px;">no outstanding notices</span></div>
 <div class="abs" style="left:57px;top:121.4px"><span style="letter-spacing:-0.36px;">There are</span></div><div class="abs lnk" style="left:187.3px;top:121.4px"><span style="letter-spacing:0.34px;">no outstanding notices</span></div>
 <div class="abs lnk" style="left:56.5px;top:163.4px"><span style="letter-spacing:0.03px;">On-Call Schedule</span></div>
</div>
<div class="card" style="left:2360px;top:513px;width:716px;height:196px">
 <div class="hd"><span class="lnk"><span style="letter-spacing:-0.48px;">Resource Graphs</span></span></div>
 <div class="abs" style="left:13px;top:78px;width:610px;height:70px;border:2px solid #ced4da;border-right:0;border-radius:8px 0 0 8px;background:#fff"></div><div class="abs" style="left:39.3px;top:93.5px;color:#6c757d"><span style="letter-spacing:0.06px;">Type the node label</span></div><div class="abs" style="left:621px;top:78px;width:78px;height:70px;border:2px solid #ced4da;border-radius:0 8px 8px 0;background:#e9ecef"></div><svg class="abs" style="left:644.3px;top:99.5px" width="30" height="30" viewBox="0 0 30 30"><circle cx="12.6" cy="12.6" r="9" fill="none" stroke="#495057" stroke-width="3.5"/><path d="M19.4 19.5 L25.8 25.8" stroke="#495057" stroke-width="3.8" stroke-linecap="round"/></svg>
</div>
<div class="card" style="left:2360px;top:742px;width:716px;height:196px">
 <div class="hd"><span class="lnk"><span style="letter-spacing:-0.60px;">KSC Reports</span></span></div>
 <div class="abs" style="left:13px;top:78px;width:610px;height:70px;border:2px solid #ced4da;border-right:0;border-radius:8px 0 0 8px;background:#fff"></div><div class="abs" style="left:39.3px;top:93.5px;color:#6c757d"><span style="letter-spacing:-0.11px;">Type the KSC report name</span></div><div class="abs" style="left:621px;top:78px;width:78px;height:70px;border:2px solid #ced4da;border-radius:0 8px 8px 0;background:#e9ecef"></div><svg class="abs" style="left:644.3px;top:99.5px" width="30" height="30" viewBox="0 0 30 30"><circle cx="12.6" cy="12.6" r="9" fill="none" stroke="#495057" stroke-width="3.5"/><path d="M19.4 19.5 L25.8 25.8" stroke="#495057" stroke-width="3.8" stroke-linecap="round"/></svg>
</div>
<div class="card" style="left:2360px;top:971px;width:716px;height:472px">
 <div class="hd"><span style="letter-spacing:-0.47px;">Grafana Dashboards</span></div>
 <svg class="abs" style="left:13px;top:88px" width="28" height="24" fill="#1d5589"><rect x="0" y="20" width="4" height="4"/><rect x="6" y="18" width="4" height="6"/><rect x="12" y="14" width="4" height="10"/><rect x="18" y="8" width="4" height="16"/><rect x="24" y="0" width="4" height="24"/></svg><div class="abs lnk" style="left:48.5px;top:77.8px"><span style="letter-spacing:-0.17px;">Alarms – Acked vs Unacked</span></div><svg class="abs" style="left:13px;top:130px" width="28" height="24" fill="#1d5589"><rect x="0" y="20" width="4" height="4"/><rect x="6" y="18" width="4" height="6"/><rect x="12" y="14" width="4" height="10"/><rect x="18" y="8" width="4" height="16"/><rect x="24" y="0" width="4" height="24"/></svg><div class="abs lnk" style="left:48.5px;top:119.8px"><span style="letter-spacing:-0.33px;">BGP Peering Details</span></div><svg class="abs" style="left:13px;top:172px" width="28" height="24" fill="#1d5589"><rect x="0" y="20" width="4" height="4"/><rect x="6" y="18" width="4" height="6"/><rect x="12" y="14" width="4" height="10"/><rect x="18" y="8" width="4" height="16"/><rect x="24" y="0" width="4" height="24"/></svg><div class="abs lnk" style="left:48.5px;top:161.8px"><span style="letter-spacing:-0.10px;">Edge Router Traffic Volume</span></div><svg class="abs" style="left:13px;top:214px" width="28" height="24" fill="#1d5589"><rect x="0" y="20" width="4" height="4"/><rect x="6" y="18" width="4" height="6"/><rect x="12" y="14" width="4" height="10"/><rect x="18" y="8" width="4" height="16"/><rect x="24" y="0" width="4" height="24"/></svg><div class="abs lnk" style="left:48.5px;top:203.8px"><span style="letter-spacing:-0.13px;">Edge Router Traffic Volume Forecast</span></div><svg class="abs" style="left:13px;top:256px" width="28" height="24" fill="#1d5589"><rect x="0" y="20" width="4" height="4"/><rect x="6" y="18" width="4" height="6"/><rect x="12" y="14" width="4" height="10"/><rect x="18" y="8" width="4" height="16"/><rect x="24" y="0" width="4" height="24"/></svg><div class="abs lnk" style="left:48.5px;top:245.8px"><span style="letter-spacing:-0.03px;">Enterprise Overview</span></div><svg class="abs" style="left:13px;top:298px" width="28" height="24" fill="#1d5589"><rect x="0" y="20" width="4" height="4"/><rect x="6" y="18" width="4" height="6"/><rect x="12" y="14" width="4" height="10"/><rect x="18" y="8" width="4" height="16"/><rect x="24" y="0" width="4" height="24"/></svg><div class="abs lnk" style="left:48.5px;top:287.8px"><span style="letter-spacing:-0.26px;">Flow Deep Dive | OpenNMS Helm</span></div><svg class="abs" style="left:13px;top:340px" width="28" height="24" fill="#1d5589"><rect x="0" y="20" width="4" height="4"/><rect x="6" y="18" width="4" height="6"/><rect x="12" y="14" width="4" height="10"/><rect x="18" y="8" width="4" height="16"/><rect x="24" y="0" width="4" height="24"/></svg><div class="abs lnk" style="left:48.5px;top:329.8px"><span style="letter-spacing:0.05px;">Juniper basics</span></div><svg class="abs" style="left:13px;top:382px" width="28" height="24" fill="#1d5589"><rect x="0" y="20" width="4" height="4"/><rect x="6" y="18" width="4" height="6"/><rect x="12" y="14" width="4" height="10"/><rect x="18" y="8" width="4" height="16"/><rect x="24" y="0" width="4" height="24"/></svg><div class="abs lnk" style="left:48.5px;top:371.8px"><span style="letter-spacing:-0.18px;">Retail Alarms</span></div><svg class="abs" style="left:13px;top:424px" width="28" height="24" fill="#1d5589"><rect x="0" y="20" width="4" height="4"/><rect x="6" y="18" width="4" height="6"/><rect x="12" y="14" width="4" height="10"/><rect x="18" y="8" width="4" height="16"/><rect x="24" y="0" width="4" height="24"/></svg><div class="abs lnk" style="left:48.5px;top:413.8px"><span style="letter-spacing:0.07px;">Retail Interface Detail</span></div>
</div>
<div class="card" style="left:2360px;top:1476px;width:716px;height:600px">
 <div class="hd"><span style="letter-spacing:-0.29px;">Quick Search</span></div>
 <div class="abs" style="left:12.5px;top:93.5px"><span style="letter-spacing:-0.10px;">Node ID</span></div>
 <div class="abs" style="left:13px;top:148px;width:610px;height:70px;border:2px solid #ced4da;border-right:0;border-radius:8px 0 0 8px;background:#fff"></div><div class="abs" style="left:39.3px;top:163.5px;color:#6c757d"><span style="letter-spacing:-0.14px;">Node ID</span></div><div class="abs" style="left:621px;top:148px;width:78px;height:70px;border:2px solid #6c757d;border-radius:0 8px 8px 0;background:#6c757d"></div><svg class="abs" style="left:644.3px;top:169.5px" width="30" height="30" viewBox="0 0 30 30"><circle cx="12.6" cy="12.6" r="9" fill="none" stroke="#fff" stroke-width="3.5"/><path d="M19.4 19.5 L25.8 25.8" stroke="#fff" stroke-width="3.8" stroke-linecap="round"/></svg>
 <div class="abs" style="left:12.5px;top:265.3px"><span style="letter-spacing:0.18px;">Node label</span></div>
 <div class="abs" style="left:13px;top:320px;width:610px;height:70px;border:2px solid #ced4da;border-right:0;border-radius:8px 0 0 8px;background:#fff"></div><div class="abs" style="left:39.3px;top:335.5px;color:#6c757d"><span style="letter-spacing:0.34px;">localhost</span></div><div class="abs" style="left:621px;top:320px;width:78px;height:70px;border:2px solid #6c757d;border-radius:0 8px 8px 0;background:#6c757d"></div><svg class="abs" style="left:644.3px;top:341.5px" width="30" height="30" viewBox="0 0 30 30"><circle cx="12.6" cy="12.6" r="9" fill="none" stroke="#fff" stroke-width="3.5"/><path d="M19.4 19.5 L25.8 25.8" stroke="#fff" stroke-width="3.8" stroke-linecap="round"/></svg>
</div>

</body></html>
